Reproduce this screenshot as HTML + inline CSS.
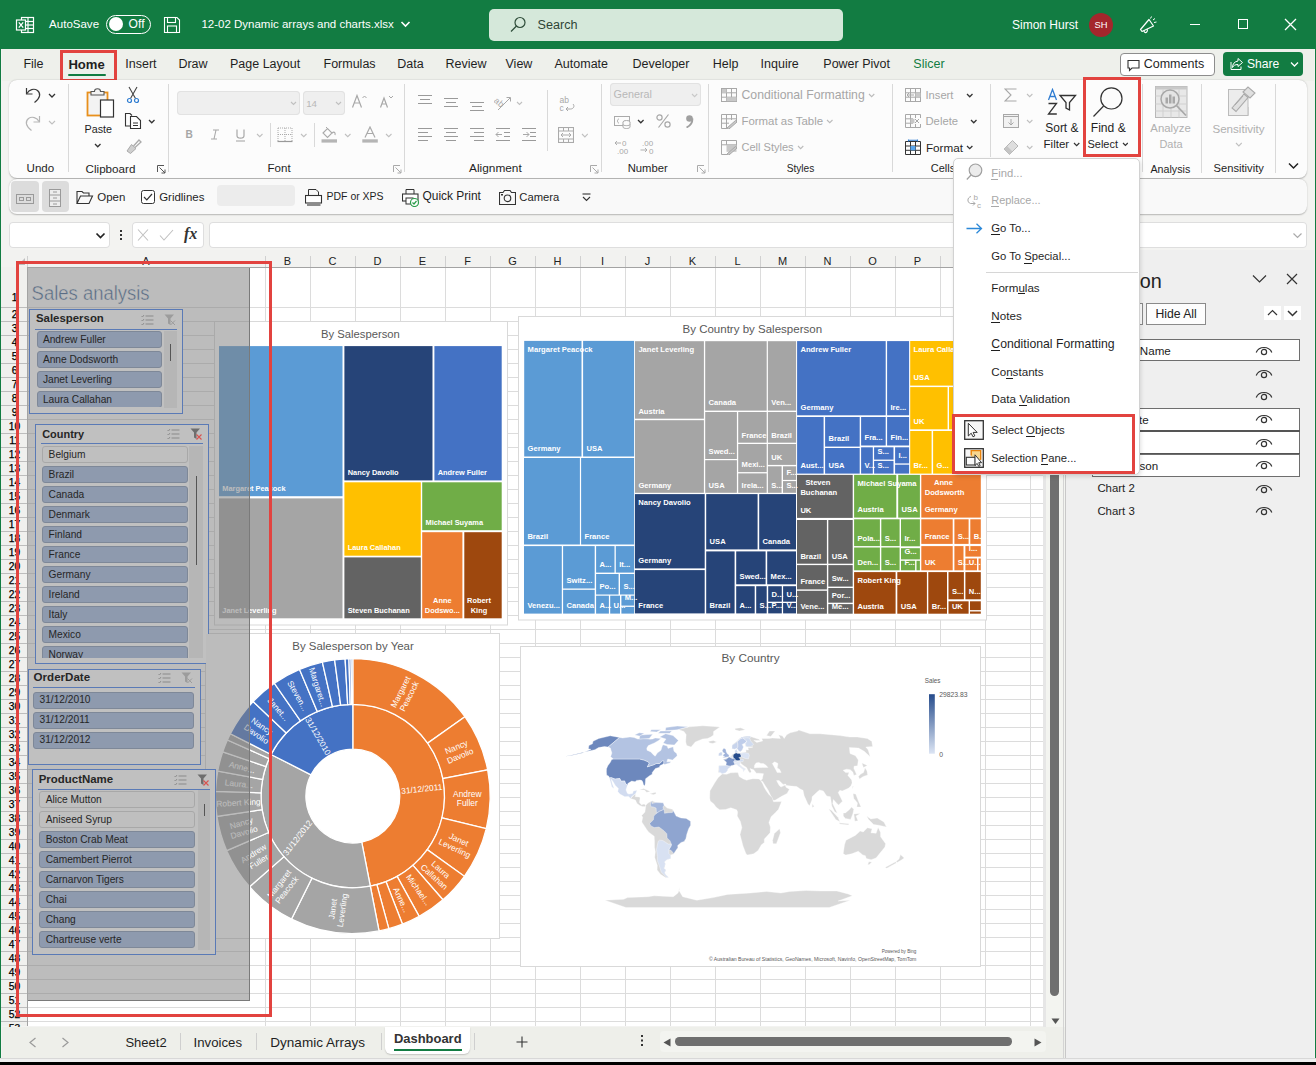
<!DOCTYPE html>
<html><head><meta charset="utf-8">
<style>
html,body{margin:0;padding:0}
body{width:1316px;height:1065px;position:relative;overflow:hidden;background:#f3f3f1;font-family:"Liberation Sans",sans-serif;color:#1f1f1f}
.t{position:absolute;white-space:nowrap;line-height:1}
.vs{position:absolute;top:88px;width:1px;height:84px;background:#d9d9d9}
.gl{position:absolute;top:162px;font-size:12.5px;text-align:center;line-height:1;color:#222}
.dl{position:absolute;top:164px;width:10px;height:10px}
.ch{position:absolute;top:256px;height:11px;font-size:11px;line-height:11px;text-align:center;color:#222}
.rh{position:absolute;left:1px;width:27px;height:13px;font-size:10.3px;line-height:13px;text-align:center;color:#000;-webkit-text-stroke:0.25px #000}
.si{position:absolute;height:17px;box-sizing:border-box;border:1px solid #7e8898;border-radius:3px;background:#8e9aae;font-size:11.5px;line-height:15px;padding-left:7px;color:#222;white-space:nowrap;overflow:hidden}
.su{background:#bfbfbf;border-color:#a8a8a8}
.sh{position:absolute;font-size:12px;font-weight:bold;color:#2a2a2a;line-height:1}
.sb{position:absolute;border:1px solid #5b7bb8;box-sizing:border-box;background:#c0c0c0}
.mi{position:absolute;left:991px;font-size:12.5px;line-height:1;white-space:nowrap;color:#1f1f1f}
.pr{position:absolute;font-size:12.5px;line-height:1;color:#1f1f1f;white-space:nowrap}
</style></head><body>
<div style="position:absolute;left:0;top:0;width:1316px;height:49px;background:#127c42"></div>
<div style="position:absolute;left:0;top:0;width:1.3px;height:1060px;background:#127c42"></div>
<div style="position:absolute;left:1314.7px;top:0;width:1.3px;height:1060px;background:#127c42"></div>
<svg style="position:absolute;left:15px;top:15px" width="20" height="20" viewBox="0 0 20 20">
 <rect x="6.5" y="2.5" width="12" height="15" fill="none" stroke="#fff" stroke-width="1.2"/>
 <line x1="10" y1="6.5" x2="18.5" y2="6.5" stroke="#fff" stroke-width="1.2"/>
 <line x1="10" y1="10" x2="18.5" y2="10" stroke="#fff" stroke-width="1.2"/>
 <line x1="10" y1="13.5" x2="18.5" y2="13.5" stroke="#fff" stroke-width="1.2"/>
 <line x1="13" y1="2.5" x2="13" y2="17.5" stroke="#fff" stroke-width="1.2"/>
 <rect x="1.5" y="5" width="9" height="10" fill="#127c42" stroke="#fff" stroke-width="1.2"/>
 <path d="M3.8 7.3 L8.2 12.7 M8.2 7.3 L3.8 12.7" stroke="#fff" stroke-width="1.3"/>
</svg>
<div class="t" style="left:49.10px;top:18.74px;font-size:11.53px;color:#ffffff">AutoSave</div>
<div style="position:absolute;left:106px;top:14.5px;width:45px;height:19.5px;border:1.2px solid #fff;border-radius:10px;box-sizing:border-box"></div>
<div style="position:absolute;left:108.5px;top:17px;width:14.4px;height:14.4px;border-radius:50%;background:#fff"></div>
<div class="t" style="left:128.60px;top:18.24px;font-size:12.12px;color:#ffffff">Off</div>
<svg style="position:absolute;left:163px;top:16px" width="18" height="18" viewBox="0 0 18 18">
 <path d="M1.5 1.5 H14 L16.5 4 V16.5 H1.5 Z" fill="none" stroke="#fff" stroke-width="1.1"/>
 <rect x="4.5" y="1.5" width="8" height="5" fill="none" stroke="#fff" stroke-width="1.1"/>
 <rect x="4.5" y="10" width="9" height="6.5" fill="none" stroke="#fff" stroke-width="1.1"/>
</svg>
<div class="t" style="left:201.40px;top:19.25px;font-size:11.51px;color:#ffffff">12-02 Dynamic arrays and charts.xlsx</div>
<svg style="position:absolute;left:400px;top:20px" width="11" height="9"><path d="M1.5 2 L5.5 6 L9.5 2" fill="none" stroke="#fff" stroke-width="1.6"/></svg>
<div style="position:absolute;left:489px;top:9px;width:354px;height:32px;background:#d5e8da;border-radius:5px"></div>
<svg style="position:absolute;left:508px;top:15px" width="20" height="20" viewBox="0 0 20 20"><circle cx="12" cy="7.5" r="5" fill="none" stroke="#2f4d3a" stroke-width="1.2"/><line x1="8.5" y1="11" x2="3" y2="16.5" stroke="#2f4d3a" stroke-width="1.3"/></svg>
<div class="t" style="left:537.50px;top:18.82px;font-size:12.62px;color:#2f4536">Search</div>
<div class="t" style="left:1012.00px;top:18.84px;font-size:12.00px;color:#ffffff">Simon Hurst</div>
<div style="position:absolute;left:1089px;top:13px;width:24px;height:24px;border-radius:50%;background:#a4262c"></div>
<div class="t" style="left:1094.50px;top:21.08px;font-size:9.35px;color:#ffffff">SH</div>
<svg style="position:absolute;left:1138px;top:15px" width="20" height="20" viewBox="0 0 20 20"><path d="M2.5 14.5 L11 4.5 L15.5 11 L4 16.5 Z" fill="none" stroke="#fff" stroke-width="1.2" stroke-linejoin="round"/><path d="M6 15.5 C6 18.5 9.5 18.5 9.5 14.3" fill="none" stroke="#fff" stroke-width="1.1"/><path d="M12.5 3.5 L13.5 1.5 M15 5 L17 3.5 M16 7.5 L18.5 7" stroke="#fff" stroke-width="1"/></svg>
<div style="position:absolute;left:1189.8px;top:24.2px;width:10px;height:1.1px;background:#fff"></div>
<div style="position:absolute;left:1238px;top:19px;width:10px;height:10px;border:1.2px solid #fff;box-sizing:border-box"></div>
<svg style="position:absolute;left:1284px;top:18px" width="13" height="13"><path d="M1 1 L12 12 M12 1 L1 12" stroke="#fff" stroke-width="1.3"/></svg>
<div style="position:absolute;left:2px;top:49px;width:1312px;height:32px;background:#eef0eb"></div>
<div class="t" style="left:23.40px;top:58.12px;font-size:12.50px">File</div>
<div class="t" style="left:125.30px;top:58.12px;font-size:12.50px">Insert</div>
<div class="t" style="left:178.40px;top:58.12px;font-size:12.50px">Draw</div>
<div class="t" style="left:230.00px;top:58.12px;font-size:12.50px">Page Layout</div>
<div class="t" style="left:323.50px;top:58.12px;font-size:12.50px">Formulas</div>
<div class="t" style="left:397.20px;top:58.12px;font-size:12.50px">Data</div>
<div class="t" style="left:445.50px;top:58.12px;font-size:12.50px">Review</div>
<div class="t" style="left:505.50px;top:58.12px;font-size:12.50px">View</div>
<div class="t" style="left:554.50px;top:58.12px;font-size:12.50px">Automate</div>
<div class="t" style="left:632.50px;top:58.12px;font-size:12.50px">Developer</div>
<div class="t" style="left:712.70px;top:58.12px;font-size:12.50px">Help</div>
<div class="t" style="left:760.60px;top:58.12px;font-size:12.50px">Inquire</div>
<div class="t" style="left:823.30px;top:58.12px;font-size:12.50px">Power Pivot</div>
<div class="t" style="left:68.40px;top:57.62px;font-size:13.09px;font-weight:bold">Home</div>
<div class="t" style="left:913.30px;top:58.12px;font-size:12.50px;color:#127c42">Slicer</div>
<div style="position:absolute;left:68px;top:74px;width:38px;height:2.3px;background:#127c42;border-radius:1px"></div>
<div style="position:absolute;left:1119.5px;top:52.5px;width:95px;height:23.5px;border:1px solid #8d8d8d;border-radius:4px;background:#fff;box-sizing:border-box"></div>
<svg style="position:absolute;left:1127px;top:59px" width="13" height="13" viewBox="0 0 13 13"><path d="M1 1.5 H12 V9 H5 L2.5 11.5 V9 H1 Z" fill="none" stroke="#333" stroke-width="1.1"/></svg>
<div class="t" style="left:1143.70px;top:58.09px;font-size:12.53px">Comments</div>
<div style="position:absolute;left:1223px;top:52px;width:80px;height:24px;background:#127c42;border-radius:4px"></div>
<svg style="position:absolute;left:1230px;top:57px" width="14" height="14" viewBox="0 0 14 14"><path d="M8 1.5 L12.5 5.5 L8 9.5 V7.5 C5 7.5 3.5 8.5 2.5 10.5 C2.5 7 4.5 4.5 8 4 Z" fill="none" stroke="#fff" stroke-width="1"/><path d="M1 5 V12.5 H11 V9.5" fill="none" stroke="#fff" stroke-width="1"/></svg>
<div class="t" style="left:1247.00px;top:58.43px;font-size:12.13px;color:#ffffff">Share</div>
<svg style="position:absolute;left:1290px;top:61px" width="9" height="7"><path d="M1 1.5 L4.5 5 L8 1.5" fill="none" stroke="#fff" stroke-width="1.3"/></svg>
<div style="position:absolute;left:60px;top:50px;width:57px;height:32px;border:3px solid #e2433f;box-sizing:border-box"></div><div style="position:absolute;left:9px;top:80px;width:1298px;height:98px;background:#fcfcfc;border-radius:8px;box-shadow:0 0.5px 1.5px rgba(0,0,0,0.28)"></div>
<div style="position:absolute;left:68.1px;top:84px;width:1px;height:88.4px;background:#d9d9d9"></div>
<div style="position:absolute;left:168.0px;top:84px;width:1px;height:88.4px;background:#d9d9d9"></div>
<div style="position:absolute;left:404.0px;top:84px;width:1px;height:88.4px;background:#d9d9d9"></div>
<div style="position:absolute;left:600.7px;top:84px;width:1px;height:88.4px;background:#d9d9d9"></div>
<div style="position:absolute;left:708.1px;top:84px;width:1px;height:88.4px;background:#d9d9d9"></div>
<div style="position:absolute;left:892.3px;top:84px;width:1px;height:88.4px;background:#d9d9d9"></div>
<div style="position:absolute;left:990.1px;top:84px;width:1px;height:73.0px;background:#d9d9d9"></div>
<div style="position:absolute;left:1142.0px;top:84px;width:1px;height:88.4px;background:#d9d9d9"></div>
<div style="position:absolute;left:1201.1px;top:84px;width:1px;height:88.8px;background:#d9d9d9"></div>
<div style="position:absolute;left:1275.0px;top:84px;width:1px;height:88.8px;background:#d9d9d9"></div>
<div class="t" style="left:26.60px;top:162.82px;font-size:11.55px;color:#1f1f1f">Undo</div>
<div class="t" style="left:85.60px;top:162.75px;font-size:11.64px;color:#1f1f1f">Clipboard</div>
<div class="t" style="left:267.50px;top:162.82px;font-size:11.55px;color:#1f1f1f">Font</div>
<div class="t" style="left:469.10px;top:162.58px;font-size:11.83px;color:#1f1f1f">Alignment</div>
<div class="t" style="left:627.70px;top:163.05px;font-size:11.28px;color:#1f1f1f">Number</div>
<div class="t" style="left:786.70px;top:164.00px;font-size:10.17px;color:#1f1f1f">Styles</div>
<div class="t" style="left:930.80px;top:163.28px;font-size:11.01px;color:#1f1f1f">Cells</div>
<div class="t" style="left:1150.50px;top:163.56px;font-size:10.68px;color:#1f1f1f">Analysis</div>
<div class="t" style="left:1213.60px;top:163.16px;font-size:11.16px;color:#1f1f1f">Sensitivity</div>
<svg style="position:absolute;left:157px;top:165px" width="9" height="9" viewBox="0 0 9 9"><path d="M0.5 7 V0.5 H7 M2.5 2.5 L8 8 M4.5 8 H8 V4.5" fill="none" stroke="#555" stroke-width="1"/></svg>
<svg style="position:absolute;left:393px;top:165px" width="9" height="9" viewBox="0 0 9 9"><path d="M0.5 7 V0.5 H7 M2.5 2.5 L8 8 M4.5 8 H8 V4.5" fill="none" stroke="#aaa" stroke-width="1"/></svg>
<svg style="position:absolute;left:590px;top:165px" width="9" height="9" viewBox="0 0 9 9"><path d="M0.5 7 V0.5 H7 M2.5 2.5 L8 8 M4.5 8 H8 V4.5" fill="none" stroke="#aaa" stroke-width="1"/></svg>
<svg style="position:absolute;left:697px;top:165px" width="9" height="9" viewBox="0 0 9 9"><path d="M0.5 7 V0.5 H7 M2.5 2.5 L8 8 M4.5 8 H8 V4.5" fill="none" stroke="#aaa" stroke-width="1"/></svg>
<svg style="position:absolute;left:24px;top:85px" width="18" height="46" viewBox="0 0 18 46">
 <path d="M2.5 3 V9 H8.5" fill="none" stroke="#3a3a3a" stroke-width="1.2"/>
 <path d="M3 8.5 C5 4.5 10 3 13.5 5.5 C17 8.5 16.5 13 10.5 17.5" fill="none" stroke="#3a3a3a" stroke-width="1.2"/>
 <path d="M15.5 31 V37 H9.5" fill="none" stroke="#b5b5b5" stroke-width="1.2"/>
 <path d="M15 36.5 C13 32.5 8 31 4.5 33.5 C1 36.5 1.5 41 7.5 45.5" fill="none" stroke="#b5b5b5" stroke-width="1.2"/>
</svg>
<svg style="position:absolute;left:47.5px;top:93.0px" width="8.0" height="5.5"><path d="M1 1 L4.00 4.00 L7.00 1" fill="none" stroke="#333" stroke-width="1.3"/></svg>
<svg style="position:absolute;left:47.5px;top:119.5px" width="8.0" height="5.5"><path d="M1 1 L4.00 4.00 L7.00 1" fill="none" stroke="#c0c0c0" stroke-width="1.1"/></svg>
<svg style="position:absolute;left:86px;top:87px" width="30" height="32" viewBox="0 0 30 32">
 <rect x="1.5" y="5.5" width="20" height="23" fill="#f3f3f3" stroke="#e8901c" stroke-width="1.8"/>
 <path d="M5 8 V4.5 H8.5 C8.5 0.8 14.5 0.8 14.5 4.5 H18 V8 Z" fill="#f3f3f3" stroke="#555" stroke-width="1.1"/>
 <rect x="14.5" y="13" width="13" height="17" fill="#fff" stroke="#333" stroke-width="1.2"/>
</svg>
<div class="t" style="left:84.60px;top:124.39px;font-size:10.76px">Paste</div>
<svg style="position:absolute;left:93.7px;top:143.4px" width="7.5" height="5.2"><path d="M1 1 L3.75 3.75 L6.50 1" fill="none" stroke="#333" stroke-width="1.3"/></svg>
<svg style="position:absolute;left:126px;top:86px" width="14" height="18" viewBox="0 0 14 18"><path d="M3 1 L9.5 12.5 M11 1 L4.5 12.5" stroke="#444" stroke-width="1.1"/><circle cx="3.5" cy="14.5" r="2" fill="none" stroke="#2e7cd1" stroke-width="1.2"/><circle cx="10.5" cy="14.5" r="2" fill="none" stroke="#2e7cd1" stroke-width="1.2"/></svg>
<svg style="position:absolute;left:124px;top:112px" width="18" height="18" viewBox="0 0 18 18"><path d="M6 14 H1.5 V1.5 H6 L8 3.5" fill="none" stroke="#333" stroke-width="1.1"/><path d="M6.5 4.5 H12.5 L16.5 8.5 V16.5 H6.5 Z" fill="#fff" stroke="#333" stroke-width="1.1"/><path d="M9 11 H14 M9 13.5 H14" stroke="#333" stroke-width="1"/></svg>
<svg style="position:absolute;left:147.8px;top:119.0px" width="7.5" height="5.2"><path d="M1 1 L3.75 3.75 L6.50 1" fill="none" stroke="#333" stroke-width="1.3"/></svg>
<svg style="position:absolute;left:125px;top:138px" width="17" height="17" viewBox="0 0 17 17"><path d="M8.5 8 L14 2 L16 4 L10 9.5" fill="none" stroke="#aaa" stroke-width="1.3"/><path d="M2 13 L6.5 6.5 L11 10.5 L5.5 15.5 Z" fill="#cfcfcf" stroke="#aaa" stroke-width="1"/></svg>
<div style="position:absolute;left:177.2px;top:91px;width:122.6px;height:23.7px;background:#efefef;border-radius:4px;box-shadow:inset 0 0 0 1px #e2e2e2"></div>
<svg style="position:absolute;left:289.8px;top:101.0px" width="7.0" height="5.0"><path d="M1 1 L3.50 3.50 L6.00 1" fill="none" stroke="#c0c0c0" stroke-width="1.1"/></svg>
<div style="position:absolute;left:302.5px;top:91px;width:42px;height:23.7px;background:#efefef;border-radius:4px;box-shadow:inset 0 0 0 1px #e2e2e2"></div>
<div class="t" style="left:306.20px;top:98.76px;font-size:9.73px;color:#b8b8b8">14</div>
<svg style="position:absolute;left:335.0px;top:101.0px" width="7.0" height="5.0"><path d="M1 1 L3.50 3.50 L6.00 1" fill="none" stroke="#c0c0c0" stroke-width="1.1"/></svg>
<svg style="position:absolute;left:351px;top:94px" width="45" height="15" viewBox="0 0 45 15"><path d="M1.5 13.5 L6 1.5 L10.5 13.5 M3.2 9 H8.8" fill="none" stroke="#a8a8a8" stroke-width="1.2"/><path d="M11.5 4 L13.5 2 L15.5 4" fill="none" stroke="#a8a8a8" stroke-width="1"/><path d="M29.5 13.5 L33 4 L36.5 13.5 M30.8 10 H35.2" fill="none" stroke="#a8a8a8" stroke-width="1.2"/><path d="M38 2 L40 4 L42 2" fill="none" stroke="#a8a8a8" stroke-width="1"/></svg>
<div class="t" style="left:185.40px;top:130.12px;font-size:10.14px;font-weight:bold;color:#a6a6a6">B</div>
<svg style="position:absolute;left:210px;top:129px" width="10" height="11" viewBox="0 0 10 11"><path d="M3 1 H9 M1 10 H7 M6 1 L4 10" fill="none" stroke="#a8a8a8" stroke-width="1.1"/></svg>
<svg style="position:absolute;left:235px;top:129px" width="11" height="13" viewBox="0 0 11 13"><path d="M2 0.5 V6.5 C2 10 9 10 9 6.5 V0.5" fill="none" stroke="#a8a8a8" stroke-width="1.2"/><path d="M1 12 H10" stroke="#a8a8a8" stroke-width="1.1"/></svg>
<svg style="position:absolute;left:255.5px;top:133.0px" width="7.5" height="5.2"><path d="M1 1 L3.75 3.75 L6.50 1" fill="none" stroke="#c0c0c0" stroke-width="1.1"/></svg>
<div style="position:absolute;left:270.1px;top:123px;width:1px;height:24px;background:#d9d9d9"></div>
<svg style="position:absolute;left:276.5px;top:126.5px" width="16" height="16" viewBox="0 0 16 16"><path d="M1 1 H15 V14 M1 1 V14 M8 1 V14 M1 7.5 H15" fill="none" stroke="#aaa" stroke-width="1" stroke-dasharray="1 1"/><path d="M0.5 14.5 H15.5" stroke="#999" stroke-width="1.2"/></svg>
<svg style="position:absolute;left:299.7px;top:133.0px" width="7.5" height="5.2"><path d="M1 1 L3.75 3.75 L6.50 1" fill="none" stroke="#c0c0c0" stroke-width="1.1"/></svg>
<div style="position:absolute;left:313.9px;top:123px;width:1px;height:24px;background:#d9d9d9"></div>
<svg style="position:absolute;left:321px;top:126px" width="17" height="17" viewBox="0 0 17 17"><path d="M2 7 L6.5 2.5 L11 7 L6.5 11.5 Z" fill="none" stroke="#aaa" stroke-width="1.1"/><path d="M5 1 L6.5 2.5" stroke="#aaa"/><path d="M11 7 C13.5 5 14.5 7 14 9" fill="none" stroke="#aaa" stroke-width="1.1"/><rect x="0.5" y="13.3" width="15.5" height="3.3" fill="#b5b5b5"/></svg>
<svg style="position:absolute;left:344.0px;top:133.0px" width="7.5" height="5.2"><path d="M1 1 L3.75 3.75 L6.50 1" fill="none" stroke="#c0c0c0" stroke-width="1.1"/></svg>
<svg style="position:absolute;left:362px;top:126px" width="17" height="17" viewBox="0 0 17 17"><path d="M3 11.5 L8 1 L13 11.5 M5 7.5 H11" fill="none" stroke="#aaa" stroke-width="1.2"/><rect x="0.3" y="13.3" width="15.5" height="3.3" fill="#b5b5b5"/></svg>
<svg style="position:absolute;left:385.0px;top:133.0px" width="7.5" height="5.2"><path d="M1 1 L3.75 3.75 L6.50 1" fill="none" stroke="#c0c0c0" stroke-width="1.1"/></svg>
<div style="position:absolute;left:417.9px;top:94.6px;width:14.0px;height:1.2px;background:#9a9a9a"></div><div style="position:absolute;left:419.9px;top:98.7px;width:10.0px;height:1.2px;background:#9a9a9a"></div><div style="position:absolute;left:417.9px;top:103.0px;width:14.0px;height:1.2px;background:#9a9a9a"></div>
<div style="position:absolute;left:444.0px;top:97.6px;width:14.0px;height:1.2px;background:#9a9a9a"></div><div style="position:absolute;left:446.0px;top:101.9px;width:10.0px;height:1.2px;background:#9a9a9a"></div><div style="position:absolute;left:444.0px;top:106.0px;width:14.0px;height:1.2px;background:#9a9a9a"></div>
<div style="position:absolute;left:470.0px;top:101.9px;width:14.0px;height:1.2px;background:#9a9a9a"></div><div style="position:absolute;left:472.0px;top:106.0px;width:10.0px;height:1.2px;background:#9a9a9a"></div><div style="position:absolute;left:470.0px;top:110.1px;width:14.0px;height:1.2px;background:#9a9a9a"></div>
<svg style="position:absolute;left:494px;top:95px" width="18" height="16" viewBox="0 0 18 16"><text x="1" y="10" font-size="9" fill="#a8a8a8" font-family="Liberation Sans" transform="rotate(40 5 6)">ab</text><path d="M4 15 L16 3 M12.5 2.5 H16.5 V6.5" fill="none" stroke="#a8a8a8" stroke-width="1"/></svg>
<svg style="position:absolute;left:516.2px;top:101.0px" width="7.0" height="5.0"><path d="M1 1 L3.50 3.50 L6.00 1" fill="none" stroke="#c0c0c0" stroke-width="1.1"/></svg>
<div style="position:absolute;left:417.9px;top:127.7px;width:14.0px;height:1.2px;background:#9a9a9a"></div><div style="position:absolute;left:417.9px;top:131.8px;width:10.0px;height:1.2px;background:#9a9a9a"></div><div style="position:absolute;left:417.9px;top:135.9px;width:14.0px;height:1.2px;background:#9a9a9a"></div><div style="position:absolute;left:417.9px;top:139.9px;width:10.0px;height:1.2px;background:#9a9a9a"></div>
<div style="position:absolute;left:444.0px;top:127.7px;width:14.0px;height:1.2px;background:#9a9a9a"></div><div style="position:absolute;left:446.0px;top:131.8px;width:10.0px;height:1.2px;background:#9a9a9a"></div><div style="position:absolute;left:444.0px;top:135.9px;width:14.0px;height:1.2px;background:#9a9a9a"></div><div style="position:absolute;left:446.0px;top:139.9px;width:10.0px;height:1.2px;background:#9a9a9a"></div>
<div style="position:absolute;left:470.0px;top:127.7px;width:14.0px;height:1.2px;background:#9a9a9a"></div><div style="position:absolute;left:474.0px;top:131.8px;width:10.0px;height:1.2px;background:#9a9a9a"></div><div style="position:absolute;left:470.0px;top:135.9px;width:14.0px;height:1.2px;background:#9a9a9a"></div><div style="position:absolute;left:474.0px;top:139.9px;width:10.0px;height:1.2px;background:#9a9a9a"></div>
<div style="position:absolute;left:495.9px;top:127.7px;width:14.0px;height:1.2px;background:#9a9a9a"></div><div style="position:absolute;left:503.9px;top:131.8px;width:6.0px;height:1.2px;background:#9a9a9a"></div><div style="position:absolute;left:503.9px;top:135.9px;width:6.0px;height:1.2px;background:#9a9a9a"></div><div style="position:absolute;left:495.9px;top:139.9px;width:14.0px;height:1.2px;background:#9a9a9a"></div>
<svg style="position:absolute;left:495px;top:131px" width="8" height="7"><path d="M7 3.5 H1 M3.5 1 L1 3.5 L3.5 6" fill="none" stroke="#a8a8a8" stroke-width="1"/></svg>
<div style="position:absolute;left:522.0px;top:127.7px;width:14.0px;height:1.2px;background:#9a9a9a"></div><div style="position:absolute;left:530.0px;top:131.8px;width:6.0px;height:1.2px;background:#9a9a9a"></div><div style="position:absolute;left:530.0px;top:135.9px;width:6.0px;height:1.2px;background:#9a9a9a"></div><div style="position:absolute;left:522.0px;top:139.9px;width:14.0px;height:1.2px;background:#9a9a9a"></div>
<svg style="position:absolute;left:522px;top:131px" width="8" height="7"><path d="M1 3.5 H7 M4.5 1 L7 3.5 L4.5 6" fill="none" stroke="#a8a8a8" stroke-width="1"/></svg>
<div style="position:absolute;left:547px;top:90px;width:1px;height:61px;background:#d9d9d9"></div>
<svg style="position:absolute;left:558px;top:95px" width="18" height="17" viewBox="0 0 18 17"><text x="1.5" y="8" font-size="8.5" fill="#a8a8a8" font-family="Liberation Sans">ab</text><text x="1.5" y="15.5" font-size="8.5" fill="#a8a8a8" font-family="Liberation Sans">c</text><path d="M15 9 C17 11 15.5 14 12.5 14 H8 M10 12 L8 14 L10 16" fill="none" stroke="#a8a8a8" stroke-width="1"/></svg>
<svg style="position:absolute;left:557.5px;top:126.5px" width="16" height="16" viewBox="0 0 16 16"><rect x="0.5" y="0.5" width="15" height="15" fill="none" stroke="#aaa" stroke-width="1.1"/><path d="M0.5 4 H15.5 M0.5 12 H15.5 M5.5 0.5 V4 M10.5 0.5 V4 M5.5 12 V15.5 M10.5 12 V15.5 M3 8 H13 M5 6 L3 8 L5 10 M11 6 L13 8 L11 10" fill="none" stroke="#aaa" stroke-width="1"/></svg>
<svg style="position:absolute;left:580.6px;top:133.0px" width="7.8" height="5.4"><path d="M1 1 L3.90 3.90 L6.80 1" fill="none" stroke="#c0c0c0" stroke-width="1.1"/></svg>
<div style="position:absolute;left:610.3px;top:83.3px;width:90.7px;height:23px;background:#efefef;border-radius:4px;box-shadow:inset 0 0 0 1px #e2e2e2"></div>
<div class="t" style="left:613.60px;top:89.35px;font-size:10.81px;color:#b8b8b8">General</div>
<svg style="position:absolute;left:691.0px;top:93.0px" width="7.2" height="5.1"><path d="M1 1 L3.60 3.60 L6.20 1" fill="none" stroke="#c8c8c8" stroke-width="1.1"/></svg>
<svg style="position:absolute;left:614px;top:116px" width="17" height="13" viewBox="0 0 17 13"><rect x="0.5" y="0.5" width="15" height="9" fill="none" stroke="#aaa" stroke-width="1"/><path d="M5 3 C3 3 3 7 5 7" fill="none" stroke="#aaa"/><ellipse cx="12.5" cy="6" rx="3.5" ry="1.5" fill="#fcfcfc" stroke="#aaa"/><path d="M9 6 V11 C9 13 16 13 16 11 V6" fill="#fcfcfc" stroke="#aaa"/><path d="M9 8.5 C9 10 16 10 16 8.5" fill="none" stroke="#aaa"/></svg>
<svg style="position:absolute;left:636.6px;top:119.0px" width="7.6" height="5.3"><path d="M1 1 L3.80 3.80 L6.60 1" fill="none" stroke="#333" stroke-width="1.3"/></svg>
<svg style="position:absolute;left:655.5px;top:114px" width="15" height="14" viewBox="0 0 15 14"><circle cx="3.5" cy="3.5" r="2.6" fill="none" stroke="#a8a8a8" stroke-width="1.2"/><circle cx="11.5" cy="10.5" r="2.6" fill="none" stroke="#a8a8a8" stroke-width="1.2"/><path d="M12.5 0.5 L2.5 13.5" stroke="#a8a8a8" stroke-width="1.2"/></svg>
<svg style="position:absolute;left:685px;top:115px" width="9" height="13" viewBox="0 0 9 13"><circle cx="4.5" cy="3.5" r="3.3" fill="#a0a0a0"/><path d="M7.5 3.5 C7.5 8 5 11 1.5 12.5" fill="none" stroke="#a0a0a0" stroke-width="1.8"/></svg>
<svg style="position:absolute;left:613.5px;top:139px" width="45" height="15" viewBox="0 0 45 15" font-family="Liberation Sans" font-size="8" fill="#a8a8a8"><text x="8" y="7">0</text><text x="3" y="14.5">.00</text><path d="M7 4 H1 M3 2 L1 4 L3 6" fill="none" stroke="#a8a8a8" stroke-width="0.9"/><text x="28" y="7">.00</text><text x="35" y="14.5">0</text><path d="M26.5 11 H33 M31 9 L33 11 L31 13" fill="none" stroke="#a8a8a8" stroke-width="0.9"/></svg>
<svg style="position:absolute;left:721px;top:88px" width="16" height="14" viewBox="0 0 16 14"><rect x="0.5" y="0.5" width="15" height="13" fill="none" stroke="#a8a8a8"/><path d="M0.5 4.8 H15.5 M0.5 9.2 H15.5 M5.5 0.5 V13.5 M10.5 0.5 V13.5" stroke="#a8a8a8"/><rect x="1" y="1" width="4.5" height="3.8" fill="#c8c8c8"/><rect x="5.5" y="9.2" width="10" height="4" fill="#c8c8c8"/></svg>
<div class="t" style="left:741.50px;top:89.13px;font-size:12.25px;color:#a6a6a6">Conditional Formatting</div>
<svg style="position:absolute;left:868.0px;top:93.0px" width="7.3" height="5.2"><path d="M1 1 L3.65 3.65 L6.30 1" fill="none" stroke="#bbb" stroke-width="1.1"/></svg>
<svg style="position:absolute;left:721px;top:114px" width="16" height="15" viewBox="0 0 16 15"><path d="M9 14.5 H0.5 V0.5 H15.5 V7" fill="none" stroke="#a8a8a8"/><path d="M0.5 4.8 H15.5 M0.5 9.2 H8 M5.5 0.5 V14.5 M10.5 0.5 V6" stroke="#a8a8a8"/><path d="M6 14 L14.5 6.5 L16 8 L8 15" fill="#c8c8c8" stroke="#a8a8a8" stroke-width="1"/></svg>
<div class="t" style="left:741.50px;top:115.84px;font-size:11.41px;color:#a6a6a6">Format as Table</div>
<svg style="position:absolute;left:826.1px;top:119.0px" width="7.5" height="5.2"><path d="M1 1 L3.75 3.75 L6.50 1" fill="none" stroke="#bbb" stroke-width="1.1"/></svg>
<svg style="position:absolute;left:721px;top:140px" width="16" height="15" viewBox="0 0 16 15"><path d="M9 14.5 H0.5 V0.5 H15.5 V7" fill="none" stroke="#a8a8a8"/><path d="M0.5 4.8 H15.5 M5.5 0.5 V4.8" stroke="#a8a8a8"/><rect x="5.5" y="4.8" width="10" height="7" fill="#c8c8c8"/><path d="M6 14 L14.5 6.5 L16 8 L8 15" fill="#c8c8c8" stroke="#a8a8a8" stroke-width="1"/></svg>
<div class="t" style="left:741.50px;top:142.17px;font-size:11.03px;color:#a6a6a6">Cell Styles</div>
<svg style="position:absolute;left:797.2px;top:145.0px" width="7.3" height="5.2"><path d="M1 1 L3.65 3.65 L6.30 1" fill="none" stroke="#bbb" stroke-width="1.1"/></svg>
<svg style="position:absolute;left:905px;top:88px" width="16" height="14" viewBox="0 0 16 14"><rect x="0.5" y="0.5" width="15" height="13" fill="none" stroke="#a8a8a8"/><path d="M0.5 4.8 H15.5 M0.5 9.2 H15.5 M5.5 0.5 V13.5 M10.5 0.5 V13.5" stroke="#a8a8a8"/><rect x="10.5" y="4.8" width="5" height="4.4" fill="#c8c8c8"/><path d="M9 7 H2 M4 5 L2 7 L4 9" fill="none" stroke="#a8a8a8"/></svg>
<div class="t" style="left:925.50px;top:90.05px;font-size:11.16px;color:#a6a6a6">Insert</div>
<svg style="position:absolute;left:965.9px;top:93.0px" width="7.5" height="5.2"><path d="M1 1 L3.75 3.75 L6.50 1" fill="none" stroke="#333" stroke-width="1.3"/></svg>
<svg style="position:absolute;left:905px;top:114px" width="16" height="14" viewBox="0 0 16 14"><path d="M0.5 0.5 H15.5 M0.5 13.5 H15.5 M0.5 4.8 H8 M0.5 9.2 H8 M0.5 0.5 V13.5 M5.5 0.5 V13.5 M10.5 0.5 V4 M10.5 10 V13.5 M15.5 0.5 V4 M15.5 10 V13.5" stroke="#a8a8a8" fill="none"/><rect x="5.5" y="4.8" width="4" height="4.4" fill="#c8c8c8"/><path d="M10 5 L14 9 M14 5 L10 9" stroke="#a8a8a8"/></svg>
<div class="t" style="left:925.50px;top:115.98px;font-size:11.25px;color:#a6a6a6">Delete</div>
<svg style="position:absolute;left:970.0px;top:119.0px" width="7.5" height="5.2"><path d="M1 1 L3.75 3.75 L6.50 1" fill="none" stroke="#333" stroke-width="1.3"/></svg>
<svg style="position:absolute;left:905px;top:139px" width="16" height="16" viewBox="0 0 16 16"><path d="M0.5 2.5 H15.5 V15.5 H0.5 Z M0.5 7 H15.5 M0.5 11.3 H15.5 M5.5 2.5 V15.5 M10.5 2.5 V15.5" fill="none" stroke="#333"/><rect x="5.5" y="7" width="5" height="4.3" fill="#58a6ef"/><path d="M3.5 0.5 V2.5 M12.5 0.5 V2.5 M3.5 1.2 H12.5" stroke="#2e7cd1" stroke-width="1.1"/></svg>
<div class="t" style="left:925.90px;top:141.58px;font-size:11.72px">Format</div>
<svg style="position:absolute;left:966.4px;top:145.0px" width="7.4" height="5.2"><path d="M1 1 L3.70 3.70 L6.40 1" fill="none" stroke="#333" stroke-width="1.3"/></svg>
<svg style="position:absolute;left:1004px;top:88px" width="13" height="14" viewBox="0 0 13 14"><path d="M12.5 1 H1 L7 7 L1 13 H12.5" fill="none" stroke="#a8a8a8" stroke-width="1.1"/></svg>
<svg style="position:absolute;left:1025.6px;top:93.0px" width="7.4" height="5.2"><path d="M1 1 L3.70 3.70 L6.40 1" fill="none" stroke="#c0c0c0" stroke-width="1.1"/></svg>
<svg style="position:absolute;left:1003px;top:114px" width="16" height="14" viewBox="0 0 16 14"><rect x="0.5" y="0.5" width="15" height="13" fill="#f2f2f2" stroke="#a8a8a8"/><path d="M0.5 2.5 H15.5" stroke="#a8a8a8"/><path d="M8 5 V11 M5.5 8.5 L8 11 L10.5 8.5" fill="none" stroke="#a8a8a8"/></svg>
<svg style="position:absolute;left:1026.0px;top:119.0px" width="7.4" height="5.2"><path d="M1 1 L3.70 3.70 L6.40 1" fill="none" stroke="#c0c0c0" stroke-width="1.1"/></svg>
<svg style="position:absolute;left:1003px;top:139px" width="16" height="16" viewBox="0 0 16 16"><path d="M1 10 L9.5 1.5 L15 7 L6.5 15.5 Z" fill="#dedede" stroke="#b5b5b5"/><path d="M1 10 L4 7 L9.5 12.5 L6.5 15.5 Z" fill="#c4c4c4"/></svg>
<svg style="position:absolute;left:1026.0px;top:145.0px" width="7.4" height="5.2"><path d="M1 1 L3.70 3.70 L6.40 1" fill="none" stroke="#c0c0c0" stroke-width="1.1"/></svg>
<svg style="position:absolute;left:1047px;top:88px" width="31" height="28" viewBox="0 0 31 28" font-family="Liberation Sans"><path d="M1.5 12 L5.5 1.5 L9.5 12 M2.8 8.5 H8.2" fill="none" stroke="#2e7cd1" stroke-width="1.3"/><path d="M1.5 15.5 H9.5 L1.5 26 H9.8" fill="none" stroke="#333" stroke-width="1.3"/><path d="M13 7.5 H28.5 L22.5 14.5 V22 L19 20 V14.5 Z" fill="none" stroke="#333" stroke-width="1.3"/></svg>
<div class="t" style="left:1045.30px;top:122.59px;font-size:11.94px">Sort &amp;</div>
<div class="t" style="left:1043.60px;top:138.88px;font-size:11.49px">Filter</div>
<svg style="position:absolute;left:1072.5px;top:142.0px" width="7.3" height="5.2"><path d="M1 1 L3.65 3.65 L6.30 1" fill="none" stroke="#333" stroke-width="1.2"/></svg>
<svg style="position:absolute;left:1092px;top:86px" width="32" height="32" viewBox="0 0 32 32"><circle cx="19.4" cy="12.4" r="10.6" fill="none" stroke="#333" stroke-width="1.2"/><path d="M11.6 20 L1.5 30.5" stroke="#333" stroke-width="1.2"/></svg>
<div class="t" style="left:1090.80px;top:122.28px;font-size:12.08px">Find &amp;</div>
<div class="t" style="left:1087.50px;top:139.31px;font-size:10.97px">Select</div>
<svg style="position:absolute;left:1121.5px;top:142.0px" width="6.8" height="4.9"><path d="M1 1 L3.40 3.40 L5.80 1" fill="none" stroke="#333" stroke-width="1.2"/></svg>
<div style="position:absolute;left:1083.2px;top:77px;width:57.8px;height:79.7px;border:3px solid #e2433f;box-sizing:border-box"></div>
<svg style="position:absolute;left:1155px;top:86px" width="33" height="32" viewBox="0 0 33 32">
<rect x="0.5" y="0.5" width="31.5" height="31" fill="#e8e8e8" stroke="#b8b8b8"/>
<rect x="0.5" y="0.5" width="31.5" height="3" fill="#c9c9c9"/>
<path d="M0.5 10 H32 M0.5 18 H32 M0.5 25 H32 M8 3.5 V31.5 M16 3.5 V31.5 M24 3.5 V31.5" stroke="#d0d0d0"/>
<circle cx="15" cy="13" r="9" fill="#e4e4e4" stroke="#a8a8a8" stroke-width="1.5"/>
<rect x="10.5" y="11.5" width="2.5" height="6" fill="#a8a8a8"/><rect x="14" y="8.5" width="2.5" height="9" fill="#a8a8a8"/><rect x="17.5" y="10.5" width="2.5" height="7" fill="#a8a8a8"/>
<path d="M21.5 19.5 L31 29.5" stroke="#a8a8a8" stroke-width="1.8"/></svg>
<div class="t" style="left:1150.30px;top:122.87px;font-size:11.38px;color:#b0b0b0">Analyze</div>
<div class="t" style="left:1159.40px;top:139.31px;font-size:10.97px;color:#b0b0b0">Data</div>
<svg style="position:absolute;left:1228px;top:86px" width="28" height="30" viewBox="0 0 28 30">
<path d="M0.5 3.5 H17 M0.5 3.5 V29.5 H20 V21" fill="#ececec" stroke="#bbb"/>
<rect x="0.5" y="3.5" width="19.5" height="26" fill="#ececec" stroke="#bbb"/>
<path d="M4 22 L16 8 L20 11.5 L8 25.5 Z" fill="#e0e0e0" stroke="#aaa" stroke-width="1.1"/>
<path d="M7 19 L15 10" stroke="#aaa" stroke-width="1"/>
<path d="M15 6 L20 1 L27 7 L22 12 Z" fill="#e0e0e0" stroke="#aaa" stroke-width="1.1"/>
</svg>
<div class="t" style="left:1212.40px;top:122.66px;font-size:11.62px;color:#b0b0b0">Sensitivity</div>
<svg style="position:absolute;left:1234.7px;top:142.0px" width="7.7" height="5.3"><path d="M1 1 L3.85 3.85 L6.70 1" fill="none" stroke="#c0c0c0" stroke-width="1.1"/></svg>
<svg style="position:absolute;left:1287.5px;top:162px" width="11" height="8"><path d="M1 1.5 L5.5 6 L10 1.5" fill="none" stroke="#222" stroke-width="1.5"/></svg>
<div style="position:absolute;left:9px;top:179px;width:1298px;height:35px;background:#f9f9f9;border-radius:8px;box-shadow:0 0.5px 1.5px rgba(0,0,0,0.25)"></div>
<div style="position:absolute;left:11px;top:181px;width:28px;height:31px;background:#dcdcdc;border-radius:4px"></div>
<svg style="position:absolute;left:16px;top:194px" width="18" height="10" viewBox="0 0 18 10"><rect x="0.5" y="0.5" width="17" height="9" fill="none" stroke="#9a9a9a"/><rect x="3.5" y="3.5" width="4" height="3" fill="none" stroke="#9a9a9a"/><rect x="10.5" y="3.5" width="4" height="3" fill="none" stroke="#9a9a9a"/></svg>
<div style="position:absolute;left:41.5px;top:181px;width:27.5px;height:31px;background:#dcdcdc;border-radius:4px"></div>
<svg style="position:absolute;left:49px;top:189px" width="12" height="18" viewBox="0 0 12 18"><rect x="0.5" y="0.5" width="11" height="17" fill="#ededed" stroke="#9a9a9a"/><path d="M0.5 6 H11.5 M0.5 12 H11.5 M4 3 H8 M4 9 H8 M4 15 H8" stroke="#9a9a9a"/></svg>
<svg style="position:absolute;left:76px;top:190px" width="18" height="15" viewBox="0 0 18 15"><path d="M1 13.5 V1.5 H6 L7.5 3 H13 V6 M1 13.5 H13 L16.5 6 H4.5 Z" fill="none" stroke="#333" stroke-width="1.1"/></svg>
<div class="t" style="left:97.30px;top:191.57px;font-size:11.49px">Open</div>
<svg style="position:absolute;left:140.5px;top:189.5px" width="14" height="14" viewBox="0 0 14 14"><rect x="0.5" y="0.5" width="13" height="13" rx="2" fill="#fff" stroke="#333"/><path d="M3 7 L5.8 9.8 L11 4" fill="none" stroke="#333" stroke-width="1.2"/></svg>
<div class="t" style="left:159.20px;top:191.60px;font-size:11.46px">Gridlines</div>
<div style="position:absolute;left:217px;top:185px;width:78px;height:21px;background:#ececec;border-radius:4px"></div>
<svg style="position:absolute;left:305px;top:189px" width="18" height="17" viewBox="0 0 18 17"><path d="M3.5 7 V0.5 H11 L13.5 3 V7" fill="none" stroke="#333"/><rect x="0.5" y="6.5" width="16" height="7.5" fill="#fff" stroke="#333" stroke-width="1.1"/><path d="M2 16 H15.5" stroke="#333" stroke-width="1.1"/></svg>
<div class="t" style="left:326.50px;top:192.22px;font-size:10.49px">PDF or XPS</div>
<svg style="position:absolute;left:401.5px;top:189px" width="18" height="18" viewBox="0 0 18 18"><path d="M4 5 V0.5 H12 V5" fill="none" stroke="#333"/><rect x="0.5" y="5" width="15.5" height="7" fill="#fff" stroke="#333" stroke-width="1.1"/><rect x="4" y="9" width="7" height="6" fill="#fff" stroke="#333"/><circle cx="12.5" cy="13.5" r="4" fill="#fff" stroke="#2a9d4a" stroke-width="1.2"/><path d="M10.5 13.5 L12 15 L14.5 12" fill="none" stroke="#2a9d4a" stroke-width="1.2"/></svg>
<div class="t" style="left:422.50px;top:190.99px;font-size:11.94px">Quick Print</div>
<svg style="position:absolute;left:499px;top:190px" width="17" height="15" viewBox="0 0 17 15"><path d="M0.5 2.5 H4 L5.5 0.5 H11 L12.5 2.5 H16.5 V14.5 H0.5 Z" fill="none" stroke="#333" stroke-width="1.1"/><circle cx="8.5" cy="8.3" r="3.3" fill="none" stroke="#333" stroke-width="1.1"/><rect x="2" y="4" width="2" height="1.5" fill="#333"/></svg>
<div class="t" style="left:519.30px;top:191.56px;font-size:11.26px">Camera</div>
<svg style="position:absolute;left:581.5px;top:193px" width="9" height="9" viewBox="0 0 9 9"><path d="M0.5 1 H8.5" stroke="#333" stroke-width="1.1"/><path d="M1 4 L4.5 7.5 L8 4" fill="none" stroke="#333" stroke-width="1.1"/></svg>
<div style="position:absolute;left:9px;top:222px;width:101px;height:26px;background:#fff;border-radius:4px;box-shadow:inset 0 0 0 1px #dedede"></div>
<svg style="position:absolute;left:95px;top:232px" width="11" height="8"><path d="M1.5 1.5 L5.5 5.5 L9.5 1.5" fill="none" stroke="#222" stroke-width="1.7"/></svg>
<div style="position:absolute;left:120px;top:230px;width:2px;height:2px;background:#333;box-shadow:0 4px 0 #333,0 8px 0 #333"></div>
<div style="position:absolute;left:131.5px;top:222px;width:72.5px;height:26px;background:#fff;border-radius:4px;box-shadow:inset 0 0 0 1px #dedede"></div>
<svg style="position:absolute;left:137px;top:228px" width="40" height="15" viewBox="0 0 40 15"><path d="M1 1.5 L11 12.5 M11 1.5 L1 12.5" stroke="#c0c0c0" stroke-width="1.1"/><path d="M23 7.5 L27 12 L36 2" fill="none" stroke="#c0c0c0" stroke-width="1.1"/></svg>
<div class="t" style="left:184px;top:226px;font-size:16px;font-family:'Liberation Serif',serif;font-style:italic;font-weight:bold;color:#333">fx</div>
<div style="position:absolute;left:209px;top:222px;width:1098px;height:26px;background:#fff;border-radius:4px;box-shadow:inset 0 0 0 1px #dedede"></div>
<svg style="position:absolute;left:1292px;top:232px" width="11" height="8"><path d="M1.5 1.5 L5.5 5.5 L9.5 1.5" fill="none" stroke="#aaa" stroke-width="1.2"/></svg><div style="position:absolute;left:2px;top:250px;width:1063px;height:776px;background:#fff"></div>
<div style="position:absolute;left:265px;top:267px;width:778px;height:759px;background-image:repeating-linear-gradient(to right, #dcdcdc 0, #dcdcdc 1px, transparent 1px, transparent 45px)"></div>
<div style="position:absolute;left:27px;top:307px;width:1016px;height:719px;background-image:repeating-linear-gradient(to bottom, #dcdcdc 0, #dcdcdc 1px, transparent 1px, transparent 14px)"></div>
<div style="position:absolute;left:1px;top:250px;width:1042px;height:18px;background:#f2f2f0;border-bottom:1px solid #a3a3a3;box-sizing:border-box"></div>
<div class="ch" style="left:27px;width:238px">A</div>
<div class="ch" style="left:265px;width:45px">B</div>
<div class="ch" style="left:310px;width:45px">C</div>
<div class="ch" style="left:355px;width:45px">D</div>
<div class="ch" style="left:400px;width:45px">E</div>
<div class="ch" style="left:445px;width:45px">F</div>
<div class="ch" style="left:490px;width:45px">G</div>
<div class="ch" style="left:535px;width:45px">H</div>
<div class="ch" style="left:580px;width:45px">I</div>
<div class="ch" style="left:625px;width:45px">J</div>
<div class="ch" style="left:670px;width:45px">K</div>
<div class="ch" style="left:715px;width:45px">L</div>
<div class="ch" style="left:760px;width:45px">M</div>
<div class="ch" style="left:805px;width:45px">N</div>
<div class="ch" style="left:850px;width:45px">O</div>
<div class="ch" style="left:895px;width:45px">P</div>
<div class="ch" style="left:940px;width:45px">Q</div>
<div style="position:absolute;left:265px;top:256px;width:1px;height:11px;background:#d0d0d0"></div>
<div style="position:absolute;left:310px;top:256px;width:1px;height:11px;background:#d0d0d0"></div>
<div style="position:absolute;left:355px;top:256px;width:1px;height:11px;background:#d0d0d0"></div>
<div style="position:absolute;left:400px;top:256px;width:1px;height:11px;background:#d0d0d0"></div>
<div style="position:absolute;left:445px;top:256px;width:1px;height:11px;background:#d0d0d0"></div>
<div style="position:absolute;left:490px;top:256px;width:1px;height:11px;background:#d0d0d0"></div>
<div style="position:absolute;left:535px;top:256px;width:1px;height:11px;background:#d0d0d0"></div>
<div style="position:absolute;left:580px;top:256px;width:1px;height:11px;background:#d0d0d0"></div>
<div style="position:absolute;left:625px;top:256px;width:1px;height:11px;background:#d0d0d0"></div>
<div style="position:absolute;left:670px;top:256px;width:1px;height:11px;background:#d0d0d0"></div>
<div style="position:absolute;left:715px;top:256px;width:1px;height:11px;background:#d0d0d0"></div>
<div style="position:absolute;left:760px;top:256px;width:1px;height:11px;background:#d0d0d0"></div>
<div style="position:absolute;left:805px;top:256px;width:1px;height:11px;background:#d0d0d0"></div>
<div style="position:absolute;left:850px;top:256px;width:1px;height:11px;background:#d0d0d0"></div>
<div style="position:absolute;left:895px;top:256px;width:1px;height:11px;background:#d0d0d0"></div>
<div style="position:absolute;left:940px;top:256px;width:1px;height:11px;background:#d0d0d0"></div>
<div style="position:absolute;left:985px;top:256px;width:1px;height:11px;background:#d0d0d0"></div>
<div style="position:absolute;left:27px;top:256px;width:1px;height:11px;background:#d0d0d0"></div>
<div style="position:absolute;left:1px;top:267px;width:27px;height:759px;background:#f0f0ee;border-right:1px solid #a3a3a3;box-sizing:border-box"></div>
<div style="position:absolute;left:1px;top:307px;width:26px;height:719px;background-image:repeating-linear-gradient(to bottom, #bdbdbd 0, #bdbdbd 1px, transparent 1px, transparent 14px)"></div>
<div class="rh" style="top:291.3px">1</div>
<div class="rh" style="top:308px">2</div>
<div class="rh" style="top:322px">3</div>
<div class="rh" style="top:336px">4</div>
<div class="rh" style="top:350px">5</div>
<div class="rh" style="top:364px">6</div>
<div class="rh" style="top:378px">7</div>
<div class="rh" style="top:392px">8</div>
<div class="rh" style="top:406px">9</div>
<div class="rh" style="top:420px">10</div>
<div class="rh" style="top:434px">11</div>
<div class="rh" style="top:448px">12</div>
<div class="rh" style="top:462px">13</div>
<div class="rh" style="top:476px">14</div>
<div class="rh" style="top:490px">15</div>
<div class="rh" style="top:504px">16</div>
<div class="rh" style="top:518px">17</div>
<div class="rh" style="top:532px">18</div>
<div class="rh" style="top:546px">19</div>
<div class="rh" style="top:560px">20</div>
<div class="rh" style="top:574px">21</div>
<div class="rh" style="top:588px">22</div>
<div class="rh" style="top:602px">23</div>
<div class="rh" style="top:616px">24</div>
<div class="rh" style="top:630px">25</div>
<div class="rh" style="top:644px">26</div>
<div class="rh" style="top:658px">27</div>
<div class="rh" style="top:672px">28</div>
<div class="rh" style="top:686px">29</div>
<div class="rh" style="top:700px">30</div>
<div class="rh" style="top:714px">31</div>
<div class="rh" style="top:728px">32</div>
<div class="rh" style="top:742px">33</div>
<div class="rh" style="top:756px">34</div>
<div class="rh" style="top:770px">35</div>
<div class="rh" style="top:784px">36</div>
<div class="rh" style="top:798px">37</div>
<div class="rh" style="top:812px">38</div>
<div class="rh" style="top:826px">39</div>
<div class="rh" style="top:840px">40</div>
<div class="rh" style="top:854px">41</div>
<div class="rh" style="top:868px">42</div>
<div class="rh" style="top:882px">43</div>
<div class="rh" style="top:896px">44</div>
<div class="rh" style="top:910px">45</div>
<div class="rh" style="top:924px">46</div>
<div class="rh" style="top:938px">47</div>
<div class="rh" style="top:952px">48</div>
<div class="rh" style="top:966px">49</div>
<div class="rh" style="top:980px">50</div>
<div class="rh" style="top:994px">51</div>
<div class="rh" style="top:1008px">52</div>
<div class="rh" style="top:1022px">53</div>
<svg style="position:absolute;left:17px;top:257px" width="9" height="9"><path d="M8 1 V8 H1 Z" fill="#bdbdbd"/></svg><svg style="position:absolute;left:0;top:0" width="1316" height="1065" viewBox="0 0 1316 1065" font-family="Liberation Sans">
<rect x="214.50" y="321.50" width="293.00" height="303.50" fill="#fff" stroke="#d9d9d9" stroke-width="1"/>
<rect x="518.50" y="316.50" width="468.00" height="303.50" fill="#fff" stroke="#d9d9d9" stroke-width="1"/>
<rect x="205.50" y="633.50" width="294.00" height="305.00" fill="#fff" stroke="#d9d9d9" stroke-width="1"/>
<rect x="520.50" y="646.50" width="460.00" height="320.00" fill="#fff" stroke="#d9d9d9" stroke-width="1"/>
<text x="321.00" y="337.9" font-size="11.25" fill="#595959">By Salesperson</text>
<text x="682.50" y="332.7" font-size="11.53" fill="#595959">By Country by Salesperson</text>
<text x="292.30" y="649.7" font-size="11.45" fill="#595959">By Salesperson by Year</text>
<text x="721.50" y="662.4" font-size="11.75" fill="#595959">By Country</text>
<rect x="219.00" y="346.10" width="123.50" height="150.10" fill="#5b9bd5"/>
<text x="222.30" y="490.70" font-size="7.4" font-weight="bold" fill="#fff" text-anchor="start">Margaret Peacock</text>
<rect x="219.00" y="498.40" width="123.50" height="119.90" fill="#a5a5a5"/>
<text x="222.30" y="612.80" font-size="7.4" font-weight="bold" fill="#fff" text-anchor="start">Janet Leverling</text>
<rect x="344.40" y="346.10" width="88.10" height="134.30" fill="#264478"/>
<text x="347.70" y="474.90" font-size="7.4" font-weight="bold" fill="#fff" text-anchor="start">Nancy Davolio</text>
<rect x="434.40" y="346.10" width="67.30" height="134.30" fill="#4472c4"/>
<text x="437.70" y="474.90" font-size="7.4" font-weight="bold" fill="#fff" text-anchor="start">Andrew Fuller</text>
<rect x="344.40" y="482.30" width="76.40" height="73.40" fill="#ffc000"/>
<text x="347.70" y="550.20" font-size="7.4" font-weight="bold" fill="#fff" text-anchor="start">Laura Callahan</text>
<rect x="344.40" y="557.40" width="76.40" height="60.90" fill="#636363"/>
<text x="347.70" y="612.80" font-size="7.4" font-weight="bold" fill="#fff" text-anchor="start">Steven Buchanan</text>
<rect x="422.20" y="482.30" width="79.50" height="47.90" fill="#70ad47"/>
<text x="425.50" y="524.70" font-size="7.4" font-weight="bold" fill="#fff" text-anchor="start">Michael Suyama</text>
<rect x="422.20" y="532.20" width="40.20" height="86.10" fill="#ed7d31"/>
<text x="442.30" y="603.00" font-size="7.4" font-weight="bold" fill="#fff" text-anchor="middle">Anne</text>
<text x="442.30" y="613.30" font-size="7.4" font-weight="bold" fill="#fff" text-anchor="middle">Dodswo...</text>
<rect x="464.30" y="532.20" width="37.40" height="86.10" fill="#9e480e"/>
<text x="479.00" y="603.00" font-size="7.4" font-weight="bold" fill="#fff" text-anchor="middle">Robert</text>
<text x="479.00" y="613.30" font-size="7.4" font-weight="bold" fill="#fff" text-anchor="middle">King</text>
<rect x="524.20" y="340.90" width="57.30" height="115.60" fill="#5b9bd5"/>
<rect x="583.10" y="340.90" width="51.00" height="115.60" fill="#5b9bd5"/>
<rect x="524.00" y="458.00" width="55.90" height="86.50" fill="#5b9bd5"/>
<rect x="581.10" y="458.00" width="53.00" height="86.50" fill="#5b9bd5"/>
<rect x="524.00" y="546.10" width="37.80" height="67.50" fill="#5b9bd5"/>
<rect x="563.10" y="546.10" width="31.60" height="42.40" fill="#5b9bd5"/>
<rect x="563.10" y="589.80" width="31.60" height="23.80" fill="#5b9bd5"/>
<rect x="596.10" y="546.10" width="18.40" height="26.50" fill="#5b9bd5"/>
<rect x="615.80" y="546.10" width="18.30" height="26.50" fill="#5b9bd5"/>
<rect x="596.10" y="574.00" width="22.50" height="20.50" fill="#5b9bd5"/>
<rect x="620.00" y="574.00" width="14.10" height="20.50" fill="#5b9bd5"/>
<rect x="596.10" y="595.70" width="12.80" height="17.90" fill="#5b9bd5"/>
<rect x="610.20" y="595.70" width="9.80" height="17.90" fill="#5b9bd5"/>
<rect x="621.40" y="595.70" width="12.70" height="9.90" fill="#5b9bd5"/>
<rect x="621.40" y="606.90" width="12.70" height="6.70" fill="#5b9bd5"/>
<rect x="635.00" y="341.20" width="68.90" height="77.50" fill="#a5a5a5"/>
<rect x="635.00" y="420.20" width="68.90" height="72.60" fill="#a5a5a5"/>
<rect x="705.20" y="341.20" width="61.50" height="69.40" fill="#a5a5a5"/>
<rect x="767.90" y="341.20" width="28.20" height="69.40" fill="#a5a5a5"/>
<rect x="705.20" y="412.00" width="31.70" height="47.00" fill="#a5a5a5"/>
<rect x="705.20" y="460.20" width="31.70" height="32.60" fill="#a5a5a5"/>
<rect x="738.20" y="412.00" width="28.50" height="30.70" fill="#a5a5a5"/>
<rect x="767.90" y="412.00" width="28.20" height="30.70" fill="#a5a5a5"/>
<rect x="738.20" y="444.00" width="28.50" height="28.10" fill="#a5a5a5"/>
<rect x="738.20" y="473.40" width="28.50" height="19.40" fill="#a5a5a5"/>
<rect x="767.90" y="444.00" width="28.20" height="20.90" fill="#a5a5a5"/>
<rect x="767.90" y="466.30" width="13.70" height="26.50" fill="#a5a5a5"/>
<rect x="783.00" y="466.30" width="13.10" height="13.60" fill="#a5a5a5"/>
<rect x="783.00" y="481.10" width="13.10" height="11.70" fill="#a5a5a5"/>
<rect x="634.90" y="494.10" width="69.80" height="74.30" fill="#264478"/>
<rect x="634.90" y="570.10" width="69.80" height="43.30" fill="#264478"/>
<rect x="706.20" y="494.10" width="51.40" height="55.30" fill="#264478"/>
<rect x="759.20" y="494.10" width="36.80" height="55.30" fill="#264478"/>
<rect x="706.20" y="551.40" width="28.40" height="62.00" fill="#264478"/>
<rect x="736.20" y="551.40" width="29.40" height="32.90" fill="#264478"/>
<rect x="767.20" y="551.40" width="28.80" height="32.90" fill="#264478"/>
<rect x="736.20" y="586.20" width="18.50" height="27.20" fill="#264478"/>
<rect x="756.20" y="586.20" width="10.50" height="27.20" fill="#264478"/>
<rect x="768.20" y="586.20" width="13.60" height="15.50" fill="#264478"/>
<rect x="783.10" y="586.20" width="12.90" height="15.50" fill="#264478"/>
<rect x="768.20" y="603.00" width="13.60" height="10.40" fill="#264478"/>
<rect x="783.10" y="603.00" width="12.90" height="10.40" fill="#264478"/>
<rect x="797.10" y="341.10" width="88.60" height="74.20" fill="#4472c4"/>
<rect x="887.10" y="341.10" width="22.00" height="74.20" fill="#4472c4"/>
<rect x="797.10" y="417.00" width="26.50" height="56.60" fill="#4472c4"/>
<rect x="825.10" y="417.00" width="34.60" height="29.60" fill="#4472c4"/>
<rect x="825.10" y="448.00" width="34.60" height="25.60" fill="#4472c4"/>
<rect x="861.10" y="417.00" width="24.60" height="28.50" fill="#4472c4"/>
<rect x="887.10" y="417.00" width="22.00" height="28.50" fill="#4472c4"/>
<rect x="861.10" y="447.30" width="11.70" height="26.30" fill="#4472c4"/>
<rect x="874.10" y="447.30" width="19.40" height="12.30" fill="#4472c4"/>
<rect x="874.10" y="460.90" width="19.40" height="12.70" fill="#4472c4"/>
<rect x="895.10" y="447.30" width="14.00" height="16.10" fill="#4472c4"/>
<rect x="895.10" y="464.70" width="14.00" height="8.90" fill="#4472c4"/>
<rect x="910.20" y="341.00" width="70.60" height="44.60" fill="#ffc000"/>
<rect x="910.20" y="387.10" width="37.40" height="42.20" fill="#ffc000"/>
<rect x="949.00" y="387.10" width="31.80" height="42.20" fill="#ffc000"/>
<rect x="910.20" y="431.00" width="21.40" height="42.60" fill="#ffc000"/>
<rect x="933.10" y="431.00" width="21.90" height="42.60" fill="#ffc000"/>
<rect x="956.50" y="431.00" width="24.30" height="42.60" fill="#ffc000"/>
<rect x="797.00" y="474.90" width="55.70" height="43.00" fill="#636363"/>
<rect x="797.00" y="520.00" width="29.90" height="43.70" fill="#636363"/>
<rect x="828.30" y="520.00" width="24.40" height="43.70" fill="#636363"/>
<rect x="797.00" y="565.10" width="29.90" height="24.30" fill="#636363"/>
<rect x="828.30" y="565.10" width="24.40" height="21.50" fill="#636363"/>
<rect x="797.00" y="590.80" width="29.90" height="22.90" fill="#636363"/>
<rect x="828.30" y="588.00" width="24.40" height="14.70" fill="#636363"/>
<rect x="828.30" y="604.10" width="24.40" height="9.60" fill="#636363"/>
<rect x="854.10" y="474.90" width="42.20" height="42.70" fill="#70ad47"/>
<rect x="898.20" y="474.90" width="21.70" height="42.70" fill="#70ad47"/>
<rect x="854.10" y="519.30" width="25.80" height="26.80" fill="#70ad47"/>
<rect x="881.30" y="519.30" width="18.30" height="26.80" fill="#70ad47"/>
<rect x="901.00" y="519.30" width="18.90" height="27.00" fill="#70ad47"/>
<rect x="854.10" y="547.50" width="25.80" height="22.80" fill="#70ad47"/>
<rect x="881.30" y="547.50" width="18.30" height="22.80" fill="#70ad47"/>
<rect x="901.00" y="548.20" width="18.90" height="11.20" fill="#70ad47"/>
<rect x="901.00" y="560.80" width="14.10" height="9.50" fill="#70ad47"/>
<rect x="916.50" y="560.80" width="3.40" height="9.50" fill="#70ad47"/>
<rect x="921.30" y="474.90" width="59.50" height="42.70" fill="#ed7d31"/>
<rect x="921.30" y="519.30" width="31.40" height="24.60" fill="#ed7d31"/>
<rect x="954.40" y="519.30" width="14.20" height="24.60" fill="#ed7d31"/>
<rect x="970.30" y="519.30" width="10.50" height="24.60" fill="#ed7d31"/>
<rect x="921.30" y="546.10" width="31.40" height="24.20" fill="#ed7d31"/>
<rect x="954.40" y="546.10" width="9.10" height="24.20" fill="#ed7d31"/>
<rect x="965.40" y="546.10" width="15.40" height="10.50" fill="#ed7d31"/>
<rect x="965.40" y="558.50" width="11.60" height="11.80" fill="#ed7d31"/>
<rect x="978.50" y="558.50" width="2.30" height="11.80" fill="#ed7d31"/>
<rect x="854.10" y="572.10" width="41.50" height="41.60" fill="#9e480e"/>
<rect x="897.30" y="572.10" width="29.60" height="41.60" fill="#9e480e"/>
<rect x="928.30" y="572.10" width="18.70" height="41.60" fill="#9e480e"/>
<rect x="948.50" y="572.10" width="15.40" height="27.20" fill="#9e480e"/>
<rect x="965.40" y="572.10" width="15.40" height="27.20" fill="#9e480e"/>
<rect x="948.50" y="601.30" width="20.10" height="12.40" fill="#9e480e"/>
<rect x="970.00" y="601.30" width="10.80" height="8.80" fill="#9e480e"/>
<rect x="970.00" y="611.50" width="10.80" height="2.20" fill="#9e480e"/>
<text x="527.60" y="351.60" font-size="7.6" font-weight="bold" fill="#fff" text-anchor="start">Margaret Peacock</text>
<text x="527.60" y="451.30" font-size="7.6" font-weight="bold" fill="#fff" text-anchor="start">Germany</text>
<text x="586.50" y="451.30" font-size="7.6" font-weight="bold" fill="#fff" text-anchor="start">USA</text>
<text x="527.40" y="539.30" font-size="7.6" font-weight="bold" fill="#fff" text-anchor="start">Brazil</text>
<text x="584.50" y="539.30" font-size="7.6" font-weight="bold" fill="#fff" text-anchor="start">France</text>
<text x="527.40" y="608.40" font-size="7.6" font-weight="bold" fill="#fff" text-anchor="start">Venezu...</text>
<text x="566.50" y="583.30" font-size="7.6" font-weight="bold" fill="#fff" text-anchor="start">Switz...</text>
<text x="566.50" y="608.40" font-size="7.6" font-weight="bold" fill="#fff" text-anchor="start">Canada</text>
<text x="599.50" y="567.40" font-size="7.6" font-weight="bold" fill="#fff" text-anchor="start">A...</text>
<text x="619.20" y="567.40" font-size="7.6" font-weight="bold" fill="#fff" text-anchor="start">It...</text>
<text x="599.50" y="589.30" font-size="7.6" font-weight="bold" fill="#fff" text-anchor="start">Po...</text>
<text x="623.40" y="589.30" font-size="7.6" font-weight="bold" fill="#fff" text-anchor="start">S...</text>
<text x="599.50" y="608.40" font-size="7.6" font-weight="bold" fill="#fff" text-anchor="start">A...</text>
<text x="613.60" y="608.40" font-size="7.6" font-weight="bold" fill="#fff" text-anchor="start">U...</text>
<text x="624.80" y="600.40" font-size="7.6" font-weight="bold" fill="#fff" text-anchor="start">M...</text>
<text x="638.40" y="351.90" font-size="7.6" font-weight="bold" fill="#fff" text-anchor="start">Janet Leverling</text>
<text x="638.40" y="413.50" font-size="7.6" font-weight="bold" fill="#fff" text-anchor="start">Austria</text>
<text x="638.40" y="487.60" font-size="7.6" font-weight="bold" fill="#fff" text-anchor="start">Germany</text>
<text x="708.60" y="405.40" font-size="7.6" font-weight="bold" fill="#fff" text-anchor="start">Canada</text>
<text x="771.30" y="405.40" font-size="7.6" font-weight="bold" fill="#fff" text-anchor="start">Ven...</text>
<text x="708.60" y="453.80" font-size="7.6" font-weight="bold" fill="#fff" text-anchor="start">Swed...</text>
<text x="708.60" y="487.60" font-size="7.6" font-weight="bold" fill="#fff" text-anchor="start">USA</text>
<text x="741.60" y="437.50" font-size="7.6" font-weight="bold" fill="#fff" text-anchor="start">France</text>
<text x="771.30" y="437.50" font-size="7.6" font-weight="bold" fill="#fff" text-anchor="start">Brazil</text>
<text x="741.60" y="466.90" font-size="7.6" font-weight="bold" fill="#fff" text-anchor="start">Mexi...</text>
<text x="741.60" y="487.60" font-size="7.6" font-weight="bold" fill="#fff" text-anchor="start">Irela...</text>
<text x="771.30" y="459.70" font-size="7.6" font-weight="bold" fill="#fff" text-anchor="start">UK</text>
<text x="771.30" y="487.60" font-size="7.6" font-weight="bold" fill="#fff" text-anchor="start">S...</text>
<text x="786.40" y="474.70" font-size="7.6" font-weight="bold" fill="#fff" text-anchor="start">F...</text>
<text x="786.40" y="487.60" font-size="7.6" font-weight="bold" fill="#fff" text-anchor="start">S...</text>
<text x="638.30" y="504.80" font-size="7.6" font-weight="bold" fill="#fff" text-anchor="start">Nancy Davolio</text>
<text x="638.30" y="563.20" font-size="7.6" font-weight="bold" fill="#fff" text-anchor="start">Germany</text>
<text x="638.30" y="608.20" font-size="7.6" font-weight="bold" fill="#fff" text-anchor="start">France</text>
<text x="709.60" y="544.20" font-size="7.6" font-weight="bold" fill="#fff" text-anchor="start">USA</text>
<text x="762.60" y="544.20" font-size="7.6" font-weight="bold" fill="#fff" text-anchor="start">Canada</text>
<text x="709.60" y="608.20" font-size="7.6" font-weight="bold" fill="#fff" text-anchor="start">Brazil</text>
<text x="739.60" y="579.10" font-size="7.6" font-weight="bold" fill="#fff" text-anchor="start">Swed...</text>
<text x="770.60" y="579.10" font-size="7.6" font-weight="bold" fill="#fff" text-anchor="start">Mex...</text>
<text x="739.60" y="608.20" font-size="7.6" font-weight="bold" fill="#fff" text-anchor="start">A...</text>
<text x="759.60" y="608.20" font-size="7.6" font-weight="bold" fill="#fff" text-anchor="start">S...</text>
<text x="771.60" y="596.50" font-size="7.6" font-weight="bold" fill="#fff" text-anchor="start">D...</text>
<text x="786.50" y="596.50" font-size="7.6" font-weight="bold" fill="#fff" text-anchor="start">U...</text>
<text x="771.60" y="608.20" font-size="7.6" font-weight="bold" fill="#fff" text-anchor="start">P...</text>
<text x="786.50" y="608.20" font-size="7.6" font-weight="bold" fill="#fff" text-anchor="start">V...</text>
<text x="800.50" y="351.80" font-size="7.6" font-weight="bold" fill="#fff" text-anchor="start">Andrew Fuller</text>
<text x="800.50" y="410.10" font-size="7.6" font-weight="bold" fill="#fff" text-anchor="start">Germany</text>
<text x="890.50" y="410.10" font-size="7.6" font-weight="bold" fill="#fff" text-anchor="start">Ire...</text>
<text x="800.50" y="468.40" font-size="7.6" font-weight="bold" fill="#fff" text-anchor="start">Aust...</text>
<text x="828.50" y="441.40" font-size="7.6" font-weight="bold" fill="#fff" text-anchor="start">Brazil</text>
<text x="828.50" y="468.40" font-size="7.6" font-weight="bold" fill="#fff" text-anchor="start">USA</text>
<text x="864.50" y="440.30" font-size="7.6" font-weight="bold" fill="#fff" text-anchor="start">Fra...</text>
<text x="890.50" y="440.30" font-size="7.6" font-weight="bold" fill="#fff" text-anchor="start">Fin...</text>
<text x="864.50" y="468.40" font-size="7.6" font-weight="bold" fill="#fff" text-anchor="start">V...</text>
<text x="877.50" y="454.40" font-size="7.6" font-weight="bold" fill="#fff" text-anchor="start">S...</text>
<text x="877.50" y="468.40" font-size="7.6" font-weight="bold" fill="#fff" text-anchor="start">S...</text>
<text x="898.50" y="458.20" font-size="7.6" font-weight="bold" fill="#fff" text-anchor="start">I...</text>
<text x="913.60" y="351.70" font-size="7.6" font-weight="bold" fill="#fff" text-anchor="start">Laura Callahan</text>
<text x="913.60" y="380.40" font-size="7.6" font-weight="bold" fill="#fff" text-anchor="start">USA</text>
<text x="913.60" y="424.10" font-size="7.6" font-weight="bold" fill="#fff" text-anchor="start">UK</text>
<text x="913.60" y="468.40" font-size="7.6" font-weight="bold" fill="#fff" text-anchor="start">Br...</text>
<text x="936.50" y="468.40" font-size="7.6" font-weight="bold" fill="#fff" text-anchor="start">G...</text>
<text x="800.40" y="512.70" font-size="7.6" font-weight="bold" fill="#fff" text-anchor="start">UK</text>
<text x="800.40" y="558.50" font-size="7.6" font-weight="bold" fill="#fff" text-anchor="start">Brazil</text>
<text x="831.70" y="558.50" font-size="7.6" font-weight="bold" fill="#fff" text-anchor="start">USA</text>
<text x="800.40" y="584.20" font-size="7.6" font-weight="bold" fill="#fff" text-anchor="start">France</text>
<text x="831.70" y="581.40" font-size="7.6" font-weight="bold" fill="#fff" text-anchor="start">Sw...</text>
<text x="800.40" y="608.50" font-size="7.6" font-weight="bold" fill="#fff" text-anchor="start">Vene...</text>
<text x="831.70" y="597.50" font-size="7.6" font-weight="bold" fill="#fff" text-anchor="start">Por...</text>
<text x="831.70" y="608.50" font-size="7.6" font-weight="bold" fill="#fff" text-anchor="start">Me...</text>
<text x="857.50" y="485.60" font-size="7.6" font-weight="bold" fill="#fff" text-anchor="start">Michael Suyama</text>
<text x="857.50" y="512.40" font-size="7.6" font-weight="bold" fill="#fff" text-anchor="start">Austria</text>
<text x="901.60" y="512.40" font-size="7.6" font-weight="bold" fill="#fff" text-anchor="start">USA</text>
<text x="857.50" y="540.90" font-size="7.6" font-weight="bold" fill="#fff" text-anchor="start">Pola...</text>
<text x="884.70" y="540.90" font-size="7.6" font-weight="bold" fill="#fff" text-anchor="start">S...</text>
<text x="904.40" y="541.10" font-size="7.6" font-weight="bold" fill="#fff" text-anchor="start">Ir...</text>
<text x="857.50" y="565.10" font-size="7.6" font-weight="bold" fill="#fff" text-anchor="start">Den...</text>
<text x="884.70" y="565.10" font-size="7.6" font-weight="bold" fill="#fff" text-anchor="start">S...</text>
<text x="904.40" y="554.20" font-size="7.6" font-weight="bold" fill="#fff" text-anchor="start">G...</text>
<text x="904.40" y="565.10" font-size="7.6" font-weight="bold" fill="#fff" text-anchor="start">F...</text>
<text x="924.70" y="512.40" font-size="7.6" font-weight="bold" fill="#fff" text-anchor="start">Germany</text>
<text x="924.70" y="538.70" font-size="7.6" font-weight="bold" fill="#fff" text-anchor="start">France</text>
<text x="957.80" y="538.70" font-size="7.6" font-weight="bold" fill="#fff" text-anchor="start">S...</text>
<text x="973.70" y="538.70" font-size="7.6" font-weight="bold" fill="#fff" text-anchor="start">B...</text>
<text x="924.70" y="565.10" font-size="7.6" font-weight="bold" fill="#fff" text-anchor="start">UK</text>
<text x="957.80" y="565.10" font-size="7.6" font-weight="bold" fill="#fff" text-anchor="start">S...</text>
<text x="968.80" y="551.40" font-size="7.6" font-weight="bold" fill="#fff" text-anchor="start">I...</text>
<text x="968.80" y="565.10" font-size="7.6" font-weight="bold" fill="#fff" text-anchor="start">U...</text>
<text x="857.50" y="582.80" font-size="7.6" font-weight="bold" fill="#fff" text-anchor="start">Robert King</text>
<text x="857.50" y="608.50" font-size="7.6" font-weight="bold" fill="#fff" text-anchor="start">Austria</text>
<text x="900.70" y="608.50" font-size="7.6" font-weight="bold" fill="#fff" text-anchor="start">USA</text>
<text x="931.70" y="608.50" font-size="7.6" font-weight="bold" fill="#fff" text-anchor="start">Br...</text>
<text x="951.90" y="594.10" font-size="7.6" font-weight="bold" fill="#fff" text-anchor="start">S...</text>
<text x="968.80" y="594.10" font-size="7.6" font-weight="bold" fill="#fff" text-anchor="start">N...</text>
<text x="951.90" y="608.50" font-size="7.6" font-weight="bold" fill="#fff" text-anchor="start">UK</text>
<text x="818.00" y="484.90" font-size="7.6" font-weight="bold" fill="#fff" text-anchor="middle">Steven</text>
<text x="800.40" y="494.80" font-size="7.6" font-weight="bold" fill="#fff" text-anchor="start">Buchanan</text>
<text x="943.50" y="484.90" font-size="7.6" font-weight="bold" fill="#fff" text-anchor="middle">Anne</text>
<text x="924.70" y="494.80" font-size="7.6" font-weight="bold" fill="#fff" text-anchor="start">Dodsworth</text>
<path d="M352.80 704.40 A91.7 91.7 0 0 1 370.30 886.12 L361.75 842.14 A46.9 46.9 0 0 0 352.80 749.20 Z" fill="#ed7d31" stroke="#fff" stroke-width="1.3"/>
<path d="M370.30 886.12 A91.7 91.7 0 0 1 271.09 754.47 L311.01 774.81 A46.9 46.9 0 0 0 361.75 842.14 Z" fill="#a5a5a5" stroke="#fff" stroke-width="1.3"/>
<path d="M271.09 754.47 A91.7 91.7 0 0 1 352.80 704.40 L352.80 749.20 A46.9 46.9 0 0 0 311.01 774.81 Z" fill="#4472c4" stroke="#fff" stroke-width="1.3"/>
<path d="M352.80 658.70 A137.4 137.4 0 0 1 464.94 716.70 L427.64 743.11 A91.7 91.7 0 0 0 352.80 704.40 Z" fill="#ed7d31" stroke="#fff" stroke-width="1.3"/>
<path d="M464.94 716.70 A137.4 137.4 0 0 1 487.68 769.88 L442.82 778.60 A91.7 91.7 0 0 0 427.64 743.11 Z" fill="#ed7d31" stroke="#fff" stroke-width="1.3"/>
<path d="M487.68 769.88 A137.4 137.4 0 0 1 486.29 828.64 L441.89 817.82 A91.7 91.7 0 0 0 442.82 778.60 Z" fill="#ed7d31" stroke="#fff" stroke-width="1.3"/>
<path d="M486.29 828.64 A137.4 137.4 0 0 1 464.38 876.28 L427.27 849.61 A91.7 91.7 0 0 0 441.89 817.82 Z" fill="#ed7d31" stroke="#fff" stroke-width="1.3"/>
<path d="M464.38 876.28 A137.4 137.4 0 0 1 442.94 899.80 L412.96 865.31 A91.7 91.7 0 0 0 427.27 849.61 Z" fill="#ed7d31" stroke="#fff" stroke-width="1.3"/>
<path d="M442.94 899.80 A137.4 137.4 0 0 1 419.20 916.39 L397.12 876.38 A91.7 91.7 0 0 0 412.96 865.31 Z" fill="#ed7d31" stroke="#fff" stroke-width="1.3"/>
<path d="M419.20 916.39 A137.4 137.4 0 0 1 402.49 924.20 L385.96 881.59 A91.7 91.7 0 0 0 397.12 876.38 Z" fill="#ed7d31" stroke="#fff" stroke-width="1.3"/>
<path d="M402.49 924.20 A137.4 137.4 0 0 1 388.82 928.69 L376.84 884.59 A91.7 91.7 0 0 0 385.96 881.59 Z" fill="#ed7d31" stroke="#fff" stroke-width="1.3"/>
<path d="M388.82 928.69 A137.4 137.4 0 0 1 379.02 930.98 L370.30 886.12 A91.7 91.7 0 0 0 376.84 884.59 Z" fill="#ed7d31" stroke="#fff" stroke-width="1.3"/>
<path d="M379.02 930.98 A137.4 137.4 0 0 1 291.49 919.06 L311.88 878.17 A91.7 91.7 0 0 0 370.30 886.12 Z" fill="#a5a5a5" stroke="#fff" stroke-width="1.3"/>
<path d="M291.49 919.06 A137.4 137.4 0 0 1 249.58 886.78 L283.91 856.62 A91.7 91.7 0 0 0 311.88 878.17 Z" fill="#a5a5a5" stroke="#fff" stroke-width="1.3"/>
<path d="M249.58 886.78 A137.4 137.4 0 0 1 226.70 850.67 L268.64 832.52 A91.7 91.7 0 0 0 283.91 856.62 Z" fill="#a5a5a5" stroke="#fff" stroke-width="1.3"/>
<path d="M226.70 850.67 A137.4 137.4 0 0 1 216.91 816.41 L262.11 809.65 A91.7 91.7 0 0 0 268.64 832.52 Z" fill="#a5a5a5" stroke="#fff" stroke-width="1.3"/>
<path d="M216.91 816.41 A137.4 137.4 0 0 1 215.48 791.30 L261.16 792.90 A91.7 91.7 0 0 0 262.11 809.65 Z" fill="#a5a5a5" stroke="#fff" stroke-width="1.3"/>
<path d="M215.48 791.30 A137.4 137.4 0 0 1 217.70 771.06 L262.64 779.39 A91.7 91.7 0 0 0 261.16 792.90 Z" fill="#a5a5a5" stroke="#fff" stroke-width="1.3"/>
<path d="M217.70 771.06 A137.4 137.4 0 0 1 222.73 751.82 L265.99 766.55 A91.7 91.7 0 0 0 262.64 779.39 Z" fill="#a5a5a5" stroke="#fff" stroke-width="1.3"/>
<path d="M222.73 751.82 A137.4 137.4 0 0 1 227.38 740.00 L269.09 758.66 A91.7 91.7 0 0 0 265.99 766.55 Z" fill="#a5a5a5" stroke="#fff" stroke-width="1.3"/>
<path d="M227.38 740.00 A137.4 137.4 0 0 1 230.38 733.72 L271.09 754.47 A91.7 91.7 0 0 0 269.09 758.66 Z" fill="#a5a5a5" stroke="#fff" stroke-width="1.3"/>
<path d="M230.38 733.72 A137.4 137.4 0 0 1 253.13 701.52 L286.28 732.98 A91.7 91.7 0 0 0 271.09 754.47 Z" fill="#4472c4" stroke="#fff" stroke-width="1.3"/>
<path d="M253.13 701.52 A137.4 137.4 0 0 1 274.38 683.27 L300.47 720.80 A91.7 91.7 0 0 0 286.28 732.98 Z" fill="#4472c4" stroke="#fff" stroke-width="1.3"/>
<path d="M274.38 683.27 A137.4 137.4 0 0 1 299.56 669.44 L317.26 711.57 A91.7 91.7 0 0 0 300.47 720.80 Z" fill="#4472c4" stroke="#fff" stroke-width="1.3"/>
<path d="M299.56 669.44 A137.4 137.4 0 0 1 322.36 662.11 L332.48 706.68 A91.7 91.7 0 0 0 317.26 711.57 Z" fill="#4472c4" stroke="#fff" stroke-width="1.3"/>
<path d="M322.36 662.11 A137.4 137.4 0 0 1 334.63 659.91 L340.67 705.21 A91.7 91.7 0 0 0 332.48 706.68 Z" fill="#4472c4" stroke="#fff" stroke-width="1.3"/>
<path d="M334.63 659.91 A137.4 137.4 0 0 1 345.13 658.91 L347.68 704.54 A91.7 91.7 0 0 0 340.67 705.21 Z" fill="#4472c4" stroke="#fff" stroke-width="1.3"/>
<path d="M345.13 658.91 A137.4 137.4 0 0 1 348.96 658.75 L350.24 704.44 A91.7 91.7 0 0 0 347.68 704.54 Z" fill="#4472c4" stroke="#fff" stroke-width="1.3"/>
<path d="M348.96 658.75 A137.4 137.4 0 0 1 351.12 658.71 L351.68 704.41 A91.7 91.7 0 0 0 350.24 704.44 Z" fill="#4472c4" stroke="#fff" stroke-width="1.3"/>
<path d="M351.12 658.71 A137.4 137.4 0 0 1 352.80 658.70 L352.80 704.40 A91.7 91.7 0 0 0 351.68 704.41 Z" fill="#4472c4" stroke="#fff" stroke-width="1.3"/>
<g transform="translate(421.72 788.86) rotate(-6.0)"><text x="0" y="2.94" font-size="8.4" fill="#fff" text-anchor="middle">31/12/2011</text></g>
<g transform="translate(318.15 736.08) rotate(60.0)"><text x="0" y="2.94" font-size="8.4" fill="#fff" text-anchor="middle">31/12/2010</text></g>
<g transform="translate(297.45 837.81) rotate(-52.0)"><text x="0" y="2.94" font-size="8.4" fill="#fff" text-anchor="middle">31/12/2012</text></g>
<g transform="translate(404.78 694.08) rotate(-63.0)"><text x="0" y="-1.89" font-size="8.4" fill="#fff" text-anchor="middle">Margaret</text><text x="0" y="7.77" font-size="8.4" fill="#fff" text-anchor="middle">Peacock</text></g>
<g transform="translate(458.20 751.36) rotate(-23.0)"><text x="0" y="-1.89" font-size="8.4" fill="#fff" text-anchor="middle">Nancy</text><text x="0" y="7.77" font-size="8.4" fill="#fff" text-anchor="middle">Davolio</text></g>
<g transform="translate(467.27 798.70) rotate(0.0)"><text x="0" y="-1.89" font-size="8.4" fill="#fff" text-anchor="middle">Andrew</text><text x="0" y="7.77" font-size="8.4" fill="#fff" text-anchor="middle">Fuller</text></g>
<g transform="translate(456.82 843.95) rotate(25.0)"><text x="0" y="-1.89" font-size="8.4" fill="#fff" text-anchor="middle">Janet</text><text x="0" y="7.77" font-size="8.4" fill="#fff" text-anchor="middle">Leverling</text></g>
<g transform="translate(437.49 873.16) rotate(42.0)"><text x="0" y="-1.89" font-size="8.4" fill="#fff" text-anchor="middle">Laura</text><text x="0" y="7.77" font-size="8.4" fill="#fff" text-anchor="middle">Callahan</text></g>
<g transform="translate(418.47 889.89) rotate(55.0)"><text x="0" y="2.94" font-size="8.4" fill="#fff" text-anchor="middle">Michael...</text></g>
<g transform="translate(401.19 899.87) rotate(65.0)"><text x="0" y="2.94" font-size="8.4" fill="#fff" text-anchor="middle">Anne...</text></g>
<g transform="translate(337.46 909.57) rotate(-82.0)"><text x="0" y="-1.89" font-size="8.4" fill="#fff" text-anchor="middle">Janet</text><text x="0" y="7.77" font-size="8.4" fill="#fff" text-anchor="middle">Leverling</text></g>
<g transform="translate(282.94 886.82) rotate(-52.0)"><text x="0" y="-1.89" font-size="8.4" fill="#fff" text-anchor="middle">Margaret</text><text x="0" y="7.77" font-size="8.4" fill="#fff" text-anchor="middle">Peacock</text></g>
<g transform="translate(256.12 857.45) rotate(-32.0)"><text x="0" y="-1.89" font-size="8.4" fill="#fff" text-anchor="middle">Andrew</text><text x="0" y="7.77" font-size="8.4" fill="#fff" text-anchor="middle">Fuller</text></g>
<g transform="translate(242.74 827.66) rotate(-16.0)"><text x="0" y="-1.89" font-size="8.4" fill="#fff" text-anchor="middle">Nancy</text><text x="0" y="7.77" font-size="8.4" fill="#fff" text-anchor="middle">Davolio</text></g>
<g transform="translate(238.49 802.69) rotate(-3.0)"><text x="0" y="2.94" font-size="8.4" fill="#fff" text-anchor="middle">Robert King</text></g>
<g transform="translate(238.97 783.73) rotate(6.0)"><text x="0" y="2.94" font-size="8.4" fill="#fff" text-anchor="middle">Laura...</text></g>
<g transform="translate(242.00 767.24) rotate(14.0)"><text x="0" y="2.94" font-size="8.4" fill="#fff" text-anchor="middle">Anne...</text></g>
<g transform="translate(259.24 730.10) rotate(35.0)"><text x="0" y="-1.89" font-size="8.4" fill="#fff" text-anchor="middle">Nancy</text><text x="0" y="7.77" font-size="8.4" fill="#fff" text-anchor="middle">Davolio</text></g>
<g transform="translate(278.13 709.29) rotate(49.0)"><text x="0" y="2.94" font-size="8.4" fill="#fff" text-anchor="middle">Janet...</text></g>
<g transform="translate(297.64 695.76) rotate(61.0)"><text x="0" y="2.94" font-size="8.4" fill="#fff" text-anchor="middle">Steven...</text></g>
<g transform="translate(317.80 687.08) rotate(72.0)"><text x="0" y="2.94" font-size="8.4" fill="#fff" text-anchor="middle">Margaret...</text></g>
<g stroke="#fff" stroke-width="0.35" stroke-linejoin="round">
<path d="M718.2 772.6 L718.9 765.8 L726.2 765.2 L726.5 762.4 L723.4 759.6 L726.2 758.4 L729.0 756.9 L731.2 756.2 L732.1 754.6 L735.2 753.5 L734.8 750.2 L736.8 749.5 L736.9 752.4 L739.2 753.0 L743.6 752.6 L746.1 751.9 L745.8 749.7 L748.4 750.0 L748.0 747.6 L751.4 747.6 L753.0 746.9 L747.1 747.1 L745.6 746.0 L745.1 743.0 L748.1 741.6 L745.2 741.1 L742.1 744.5 L743.2 746.8 L742.0 750.3 L740.3 751.3 L738.8 750.8 L737.5 748.7 L736.2 748.1 L732.8 749.0 L731.8 746.0 L733.4 744.0 L737.2 740.9 L739.6 738.5 L742.9 737.0 L746.4 736.1 L751.2 736.7 L758.9 739.3 L760.1 740.4 L753.8 740.4 L756.8 742.4 L762.7 740.9 L761.7 738.5 L768.7 738.5 L772.4 738.1 L780.4 738.5 L778.6 734.7 L782.6 736.1 L784.2 738.5 L786.7 734.7 L790.2 732.8 L797.4 731.1 L798.8 730.1 L810.0 733.8 L820.2 733.8 L831.0 734.7 L839.9 735.6 L849.7 737.0 L857.3 737.0 L867.3 738.5 L872.0 741.4 L871.9 742.4 L872.7 746.6 L865.8 747.1 L868.1 749.7 L870.2 756.8 L864.2 751.3 L858.5 748.1 L849.4 747.6 L850.0 753.5 L855.5 755.7 L858.3 760.1 L857.5 765.8 L854.0 766.3 L853.9 768.6 L856.6 774.6 L853.9 775.4 L852.8 772.0 L850.2 769.7 L846.5 769.2 L843.1 770.3 L845.6 772.6 L849.1 772.6 L847.9 775.4 L851.7 780.0 L852.1 782.9 L850.9 785.8 L848.8 788.1 L845.0 789.8 L842.1 790.9 L839.9 790.3 L838.2 792.6 L842.5 801.2 L838.6 804.9 L836.4 803.0 L833.4 799.5 L832.7 803.5 L837.4 813.3 L834.7 811.8 L831.8 806.1 L830.4 796.7 L826.7 796.1 L823.3 790.9 L819.6 790.0 L817.7 791.5 L812.1 796.7 L811.9 800.1 L809.6 805.8 L807.9 804.1 L804.1 795.5 L803.0 790.3 L800.2 788.9 L796.8 786.6 L791.6 786.1 L786.4 785.4 L785.6 784.0 L783.1 784.4 L779.1 780.6 L776.5 780.6 L779.1 785.2 L780.9 787.1 L785.3 785.0 L786.0 787.3 L789.4 789.2 L787.1 793.4 L782.1 796.1 L775.0 800.3 L772.9 800.3 L768.2 790.3 L763.5 782.9 L762.9 781.7 L760.7 780.6 L762.3 779.1 L762.8 776.6 L763.5 773.7 L759.4 773.2 L756.4 773.2 L753.6 769.7 L750.0 768.6 L751.3 771.4 L750.0 773.2 L748.3 770.9 L746.5 767.5 L743.0 765.2 L740.4 762.9 L739.3 764.1 L743.1 767.5 L745.7 768.9 L743.1 771.4 L742.8 769.2 L739.7 767.1 L737.2 764.6 L735.3 764.6 L732.4 765.5 L730.5 765.8 L730.7 766.9 L728.1 768.6 L727.1 770.9 L725.6 772.8 L722.1 773.7 L721.2 772.6 L718.2 772.6 Z" fill="#d9d9d9"/>
<path d="M709.9 790.9 L709.7 798.1 L710.2 800.9 L713.9 804.1 L716.0 807.0 L719.6 809.8 L725.5 809.5 L730.8 807.8 L736.6 809.8 L737.7 812.1 L737.2 816.1 L740.3 821.3 L741.9 827.6 L740.0 834.5 L743.0 846.0 L746.1 854.0 L747.6 854.9 L753.7 853.8 L758.1 850.5 L761.4 844.8 L764.3 842.5 L764.3 839.1 L770.1 832.8 L770.4 827.0 L768.9 822.5 L771.1 816.7 L775.3 812.7 L778.5 809.3 L781.6 801.5 L773.5 801.8 L772.3 797.8 L768.9 794.4 L766.4 790.9 L764.3 787.5 L762.5 783.5 L760.7 780.6 L759.0 778.9 L752.9 778.7 L747.9 779.7 L746.9 780.3 L743.3 778.9 L739.2 776.6 L738.0 772.6 L735.5 772.6 L730.6 772.8 L726.6 774.3 L722.1 774.0 L718.0 777.7 L714.3 783.5 L709.9 790.9 Z" fill="#d9d9d9"/>
<path d="M773.0 843.7 L776.4 843.7 L780.5 832.8 L779.6 828.8 L774.3 833.6 L772.6 840.2 L773.0 843.7 Z" fill="#d9d9d9"/>
<path d="M846.0 840.2 L844.5 844.8 L843.2 853.8 L845.7 855.1 L851.7 853.8 L858.3 851.2 L862.8 854.9 L865.4 855.7 L866.3 858.6 L871.1 859.7 L876.0 858.0 L884.9 847.1 L885.6 843.7 L880.6 836.8 L880.5 832.2 L878.1 827.4 L876.1 833.3 L870.9 832.8 L872.1 828.8 L867.4 827.8 L863.2 832.0 L860.2 831.1 L855.3 835.4 L846.0 840.2 Z" fill="#d9d9d9"/>
<path d="M868.8 861.8 L871.9 862.0 L869.3 864.6 L867.7 864.8 L868.8 861.8 Z" fill="#d9d9d9"/>
<path d="M900.5 854.6 L904.2 858.0 L901.0 860.3 L897.1 862.5 L896.1 861.4 L899.0 859.1 L900.5 854.6 Z" fill="#d9d9d9"/>
<path d="M895.6 861.8 L896.4 862.9 L890.8 865.9 L886.8 868.3 L885.0 867.6 L895.6 861.8 Z" fill="#d9d9d9"/>
<path d="M828.6 808.7 L831.5 810.4 L837.9 817.3 L839.9 821.7 L835.8 819.6 L828.6 808.7 Z" fill="#d9d9d9"/>
<path d="M839.1 822.8 L848.8 823.8 L848.7 825.1 L839.8 823.9 L839.1 822.8 Z" fill="#d9d9d9"/>
<path d="M843.3 812.9 L845.4 812.9 L849.5 809.4 L851.5 807.0 L853.8 809.3 L852.8 813.9 L850.6 819.4 L845.3 818.4 L843.3 816.1 L843.3 812.9 Z" fill="#d9d9d9"/>
<path d="M853.9 813.9 L860.3 813.5 L856.0 816.1 L858.0 820.7 L854.8 821.3 L853.9 813.9 Z" fill="#d9d9d9"/>
<path d="M866.6 816.1 L870.8 819.0 L877.2 818.0 L883.9 821.9 L886.5 827.0 L878.8 825.3 L873.6 824.5 L868.6 819.6 L866.6 816.1 Z" fill="#d9d9d9"/>
<path d="M853.0 793.8 L855.7 794.0 L858.3 800.7 L861.0 807.0 L856.8 807.0 L857.5 803.0 L853.8 798.4 L853.0 793.8 Z" fill="#d9d9d9"/>
<path d="M859.5 779.1 L863.3 776.4 L867.7 774.9 L867.0 770.9 L864.9 767.5 L864.6 769.2 L863.5 772.6 L860.4 774.3 L858.4 776.6 L859.5 779.1 Z" fill="#d9d9d9"/>
<path d="M863.4 767.5 L867.4 765.5 L861.8 762.9 L863.4 767.5 Z" fill="#d9d9d9"/>
<path d="M812.1 807.5 L814.2 806.4 L812.4 803.8 L812.1 807.5 Z" fill="#d9d9d9"/>
<path d="M852.3 789.2 L853.5 786.3 L852.6 786.3 L852.3 789.2 Z" fill="#d9d9d9"/>
<path d="M735.1 729.8 L739.4 731.0 L745.3 729.8 L740.7 727.8 L734.9 728.6 L735.1 729.8 Z" fill="#d9d9d9"/>
<path d="M766.5 735.6 L770.8 736.5 L775.1 731.1 L769.5 731.1 L766.5 735.6 Z" fill="#d9d9d9"/>
<path d="M708.3 741.4 L713.3 740.4 L716.7 741.9 L712.8 743.6 L709.7 743.0 L708.3 741.4 Z" fill="#d9d9d9"/>
<path d="M678.2 729.4 L689.3 726.8 L702.7 725.8 L713.7 726.4 L719.9 727.1 L713.5 731.5 L713.5 735.1 L710.8 737.0 L707.4 738.5 L702.6 739.0 L695.3 741.9 L691.1 747.1 L686.7 745.5 L685.7 741.9 L685.9 738.0 L686.2 734.7 L684.0 731.5 L678.2 729.4 Z" fill="#d9d9d9"/>
<path d="M625.9 907.5 L604.9 900.2 L623.7 899.3 L627.5 897.6 L647.9 896.7 L654.2 895.8 L673.3 896.7 L678.0 893.0 L680.3 887.0 L678.7 890.0 L682.7 896.7 L696.9 900.2 L713.3 897.6 L727.6 894.4 L750.5 893.0 L766.4 891.5 L781.0 893.0 L789.7 891.5 L806.1 890.5 L821.2 891.0 L836.8 891.0 L848.1 893.9 L852.4 895.8 L838.2 901.0 L850.3 900.2 L829.3 907.5 Z" fill="#d9d9d9"/>
<path d="M630.6 798.4 L634.3 794.6 L635.6 793.8 L635.3 796.7 L639.4 796.9 L640.1 797.9 L639.5 802.4 L641.4 804.7 L644.1 804.1 L645.8 805.3 L645.0 806.7 L642.4 806.4 L639.8 805.5 L637.0 803.5 L635.4 800.1 L630.6 798.4 Z" fill="#d9d9d9"/>
<path d="M639.3 789.9 L643.6 788.5 L647.5 790.3 L650.3 791.8 L646.6 792.2 L644.5 790.0 L639.3 789.9 Z" fill="#d9d9d9"/>
<path d="M649.7 793.8 L655.6 792.3 L656.1 793.8 L653.3 794.8 L649.7 793.8 Z" fill="#d9d9d9"/>
<path d="M645.8 805.3 L647.9 803.0 L652.2 800.8 L655.8 802.6 L661.1 802.7 L664.1 805.3 L667.2 808.1 L672.5 809.3 L674.5 812.9 L676.1 816.1 L680.9 817.9 L686.2 818.4 L690.5 821.3 L690.6 825.3 L688.6 828.8 L686.7 834.5 L685.9 838.5 L684.1 841.4 L681.0 842.5 L677.7 845.4 L677.8 847.7 L675.8 850.5 L673.9 854.0 L670.6 855.1 L670.8 858.6 L666.7 859.7 L664.4 862.0 L665.4 863.7 L664.8 866.5 L664.0 868.2 L666.0 869.9 L664.7 872.7 L665.6 874.6 L668.7 877.6 L665.5 877.6 L660.5 874.3 L657.1 869.9 L657.3 865.4 L654.7 857.4 L655.3 851.7 L654.5 847.1 L654.5 841.4 L654.2 836.2 L648.8 832.2 L647.0 829.9 L641.8 821.9 L642.7 817.3 L641.6 815.6 L643.2 813.9 L644.9 812.1 L645.5 808.1 L645.8 805.3 Z" fill="#d9d9d9"/>
<path d="M611.5 759.7 L613.5 759.0 L639.5 759.0 L644.1 760.1 L648.0 761.8 L649.3 763.1 L647.3 766.9 L651.7 765.4 L654.4 764.6 L656.2 763.5 L659.6 763.5 L662.5 760.8 L664.0 761.1 L663.8 763.7 L659.8 765.8 L659.5 767.2 L655.4 768.5 L652.2 772.6 L652.2 774.3 L649.9 775.4 L645.6 778.7 L645.2 784.0 L644.5 786.1 L643.4 784.6 L642.9 782.3 L642.0 780.6 L640.1 780.1 L636.5 780.4 L635.1 781.7 L631.7 781.1 L627.8 783.5 L627.5 785.2 L625.5 783.5 L624.6 780.9 L621.0 781.2 L619.8 778.5 L615.0 779.1 L611.7 777.7 L609.3 777.7 L608.6 776.0 L606.7 775.3 L606.4 772.0 L606.5 768.8 L607.8 765.8 L610.5 762.1 L611.5 759.7 Z" fill="#6d88bd"/>
<path d="M619.5 737.4 L610.2 735.8 L598.8 738.5 L593.0 741.3 L592.5 743.8 L588.9 745.5 L588.4 748.7 L591.0 749.4 L584.4 752.1 L594.9 749.7 L598.6 747.6 L604.4 746.6 L608.1 747.1 Z" fill="#6d88bd"/>
<path d="M584.4 752.1 L572.1 755.1 L565.5 756.2 L571.6 755.6 L582.5 753.0 Z" fill="#6d88bd"/>
<path d="M619.5 737.4 L608.1 747.1 L610.4 748.1 L611.2 750.8 L611.9 753.0 L610.6 756.8 L613.5 759.0 L639.5 759.0 L644.1 760.1 L648.0 761.8 L649.3 763.1 L647.3 766.9 L651.7 765.4 L654.4 764.6 L656.2 763.5 L659.6 763.5 L662.5 760.8 L664.0 761.1 L663.8 763.7 L664.5 764.6 L669.7 762.9 L671.1 761.8 L666.8 761.8 L667.8 759.0 L672.5 760.1 L677.2 755.7 L676.7 753.5 L674.0 751.3 L673.1 746.8 L668.0 748.4 L667.2 746.0 L663.0 744.7 L661.9 747.1 L661.0 750.3 L657.3 753.0 L655.2 756.2 L653.3 754.7 L650.8 751.9 L647.0 750.3 L646.8 748.1 L648.4 745.5 L654.3 743.0 L658.6 740.4 L660.9 738.5 L655.1 738.0 L652.7 739.0 L650.2 739.2 L643.8 738.5 L637.8 739.1 L634.0 737.5 L630.0 737.0 L622.7 738.0 L619.5 737.4 Z" fill="#b3c3e2"/>
<path d="M678.4 740.4 L674.4 745.0 L667.2 744.5 L663.2 743.0 L666.0 739.0 L659.7 737.0 L665.6 733.8 L673.0 735.6 L678.4 740.4 Z" fill="#b3c3e2"/>
<path d="M639.9 735.1 L652.7 734.2 L649.2 738.5 L639.4 739.0 L639.9 735.1 Z" fill="#b3c3e2"/>
<path d="M665.3 730.7 L677.2 729.8 L688.0 726.8 L677.3 726.1 L665.9 727.5 L665.3 730.7 Z" fill="#b3c3e2"/>
<path d="M634.7 735.1 L639.5 736.1 L644.3 733.3 L639.1 732.8 Z" fill="#b3c3e2"/>
<path d="M658.1 733.3 L669.7 733.3 L671.7 731.1 L660.6 731.1 Z" fill="#b3c3e2"/>
<path d="M650.2 731.5 L656.7 731.9 L660.8 729.8 L651.3 729.8 Z" fill="#b3c3e2"/>
<path d="M609.3 777.7 L611.7 777.7 L615.0 779.1 L619.8 778.5 L621.0 781.2 L624.6 780.9 L625.5 783.5 L627.5 785.2 L626.0 789.8 L627.3 793.2 L628.8 794.1 L632.5 793.4 L633.4 790.9 L637.1 790.3 L635.6 793.8 L634.3 794.6 L631.6 796.7 L630.6 798.4 L628.5 796.4 L624.8 796.7 L619.9 794.1 L617.7 791.5 L618.4 788.6 L615.3 785.4 L612.8 781.2 L611.2 779.2 L612.2 783.5 L614.1 788.6 L611.8 786.9 L610.8 782.9 L609.3 777.7 Z" fill="#d2dcf0"/>
<path d="M664.0 809.0 L664.5 813.3 L668.2 812.7 L672.4 812.5 L673.0 810.4 L674.5 812.9 L676.1 816.1 L680.9 817.9 L686.2 818.4 L690.5 821.3 L690.6 825.3 L688.6 828.8 L686.7 834.5 L685.9 838.5 L684.1 841.4 L681.0 842.5 L677.7 845.4 L677.8 847.7 L675.8 850.5 L673.8 853.6 L671.2 850.5 L668.9 849.6 L671.1 846.0 L671.4 844.2 L670.0 840.8 L667.1 837.9 L666.8 833.7 L663.9 830.7 L659.0 827.0 L654.2 827.6 L651.0 825.9 L649.6 823.4 L653.4 819.8 L653.8 816.1 L656.5 813.3 L659.7 811.0 L661.9 810.2 L664.0 809.0 Z" fill="#8fa5d0"/>
<path d="M651.5 801.5 L652.4 801.8 L652.0 803.5 L655.8 802.6 L661.1 802.7 L663.2 802.8 L664.1 805.3 L663.0 807.0 L663.5 809.3 L661.9 810.2 L659.7 811.0 L656.5 813.3 L656.1 808.1 L653.5 807.0 L650.9 806.7 L650.4 804.1 L651.5 801.5 Z" fill="#a6b8dc"/>
<path d="M659.6 840.2 L662.7 840.5 L668.2 844.0 L671.4 844.2 L671.1 846.0 L668.9 849.6 L668.9 853.4 L670.6 855.1 L670.8 858.6 L666.7 859.7 L664.4 862.0 L665.4 863.7 L664.8 866.5 L664.0 868.2 L666.0 869.9 L664.7 872.7 L665.6 874.6 L668.7 877.6 L666.7 877.5 L661.3 872.1 L659.2 865.4 L657.4 860.8 L657.4 856.3 L656.5 849.4 L657.2 846.0 L658.1 841.4 L659.6 840.2 Z" fill="#d8e1f2"/>
<path d="M733.1 755.9 L733.7 753.9 L735.2 753.6 L736.0 752.6 L737.4 753.5 L740.3 753.6 L741.0 755.1 L741.3 756.8 L738.8 757.6 L740.4 759.2 L739.8 760.7 L737.0 760.7 L734.7 760.6 L735.2 759.0 L733.4 758.4 L733.1 755.9 Z" fill="#264c8c"/>
<path d="M723.2 759.6 L726.2 759.3 L729.0 756.9 L731.5 758.0 L735.2 759.0 L734.7 760.6 L734.0 761.9 L734.9 762.7 L734.8 764.8 L730.7 765.8 L730.6 766.4 L725.9 765.4 L726.5 762.4 L725.3 760.9 L723.2 759.6 Z" fill="#7f97c8"/>
<path d="M718.7 765.8 L725.9 765.4 L730.6 766.4 L728.4 768.4 L727.3 769.8 L727.6 770.6 L725.6 772.8 L722.1 773.7 L720.3 772.4 L718.8 772.6 L719.0 769.2 L718.7 765.8 Z" fill="#d3ddf1"/>
<path d="M722.3 757.9 L729.0 756.7 L729.1 754.9 L727.6 754.1 L726.2 751.8 L725.9 749.5 L724.7 748.6 L723.3 748.6 L722.2 750.8 L723.2 752.4 L724.9 753.5 L723.3 754.8 L722.8 756.0 L724.7 756.4 L722.3 757.9 Z" fill="#9fb2da"/>
<path d="M718.5 756.1 L722.2 755.5 L722.2 753.6 L722.4 752.2 L720.3 752.2 L718.7 753.5 L718.5 756.1 Z" fill="#c9d5ec"/>
<path d="M731.9 748.7 L732.2 745.0 L735.7 743.0 L739.0 739.5 L741.4 737.2 L745.0 736.4 L749.5 736.2 L751.2 737.0 L749.6 738.0 L746.8 737.8 L743.0 738.0 L740.1 739.0 L737.3 741.9 L737.9 744.0 L737.9 747.1 L737.0 748.2 L734.5 749.2 L731.9 748.7 Z" fill="#c8d4ec"/>
<path d="M737.0 748.2 L737.9 747.1 L737.9 744.0 L737.3 741.9 L740.1 739.0 L743.0 738.0 L746.8 741.1 L745.1 743.0 L742.1 744.5 L743.5 747.1 L742.0 750.3 L740.4 751.8 L738.8 750.9 L737.0 748.2 Z" fill="#bfcdea"/>
<path d="M745.7 746.6 L745.6 743.5 L746.8 741.1 L743.0 738.0 L746.8 737.8 L749.6 738.0 L750.7 740.9 L752.5 743.0 L753.7 744.5 L750.8 746.6 L745.7 746.6 Z" fill="#d0dbef"/>
<path d="M734.7 751.9 L735.1 750.2 L736.8 749.5 L737.1 751.3 L738.6 751.7 L737.4 752.6 L736.0 752.6 L734.7 751.9 Z" fill="#d0dbef"/>
<path d="M740.3 753.6 L744.0 752.6 L748.6 753.3 L749.4 755.7 L748.7 757.6 L748.5 758.9 L745.0 758.4 L741.3 756.8 L741.0 755.1 L740.3 753.6 Z" fill="#dae3f3"/>
<path d="M736.5 761.0 L739.8 760.7 L740.4 759.2 L743.4 759.5 L743.1 761.5 L740.3 761.8 L737.5 761.5 L736.5 761.0 Z" fill="#d0dbef"/>
<path d="M733.3 762.1 L734.7 760.6 L736.5 760.7 L737.4 761.7 L736.1 762.5 L734.2 762.5 L733.3 762.1 Z" fill="#d8e1f3"/>
<path d="M730.0 756.8 L731.5 756.4 L733.1 757.1 L733.0 758.3 L731.5 758.0 L730.0 756.8 Z" fill="#dfe6f4"/>
<path d="M734.9 764.8 L734.2 762.5 L736.1 762.5 L737.4 761.7 L740.3 761.8 L740.6 762.8 L739.3 763.9 L741.1 766.3 L743.1 767.5 L745.7 768.9 L744.3 770.3 L743.9 771.4 L743.1 771.4 L742.9 769.2 L739.7 767.1 L737.7 765.9 L737.2 764.6 L735.3 764.6 L734.9 764.8 Z" fill="#e3e9f5"/>
<path d="M754.4 768.0 L755.8 767.7 L762.5 767.5 L767.9 767.5 L766.0 765.2 L763.3 763.5 L760.9 763.5 L758.8 762.4 L756.1 762.9 L754.5 765.2 L754.4 768.0 Z" fill="#ffffff"/>
<path d="M772.3 763.5 L774.7 761.8 L778.0 763.5 L777.2 768.0 L779.5 769.2 L781.2 772.6 L777.2 772.6 L775.5 769.2 L772.3 763.5 Z" fill="#ffffff"/>
</g>
<defs><linearGradient id="lg" x1="0" y1="0" x2="0" y2="1"><stop offset="0" stop-color="#264c8c"/><stop offset="1" stop-color="#dce5f4"/></linearGradient></defs>
<rect x="929.00" y="694.20" width="5.80" height="59.50" fill="url(#lg)"/>
<text x="924.7" y="683.3" font-size="6.3" fill="#595959">Sales</text>
<text x="939.2" y="696.7" font-size="6.8" fill="#595959">29823.83</text>
<text x="939.2" y="757.3" font-size="6.8" fill="#595959">0</text>
<text x="916.4" y="953.4" font-size="4.6" fill="#595959" text-anchor="end">Powered by Bing</text>
<text x="916.4" y="960.6" font-size="4.6" fill="#595959" text-anchor="end" textLength="207.5" lengthAdjust="spacingAndGlyphs">© Australian Bureau of Statistics, GeoNames, Microsoft, Navinfo, OpenStreetMap, TomTom</text>
</svg><div style="position:absolute;left:27.5px;top:267.5px;width:222px;height:733px;background:rgba(128,128,128,0.53);box-shadow:inset -1px -1px 0 #7a7a7a"></div>
<div class="t" style="left:31.60px;top:284.77px;font-size:18.47px;color:#5a6d85;transform:scaleY(1.08);transform-origin:0 85%;-webkit-text-stroke:0.4px #bcbcbc">Sales analysis</div>
<div class="sb" style="left:29.4px;top:309.4px;width:153.2px;height:105.1px;border-color:#5a7ab6"></div>
<div class="t" style="left:36.00px;top:313.23px;font-size:11.42px;font-weight:bold;color:#262626">Salesperson</div>
<svg style="position:absolute;left:141px;top:313.5px" width="13" height="12" viewBox="0 0 13 12"><path d="M0.5 2 L1.5 3 L3 1 M0.5 6 L1.5 7 L3 5 M0.5 10 L1.5 11 L3 9" fill="none" stroke="#8a8a8a" stroke-width="0.9"/><path d="M4.5 2 H12.5 M4.5 6 H12.5 M4.5 10 H12.5" stroke="#8a8a8a" stroke-width="1.1"/></svg>
<svg style="position:absolute;left:163.5px;top:313.5px" width="12" height="12" viewBox="0 0 12 12"><path d="M0.5 0.5 H10 L6.5 4.5 V11 L4 9.5 V4.5 Z" fill="#9c9c9c"/><path d="M6.5 6.5 L11 11 M11 6.5 L6.5 11" stroke="#9c9c9c" stroke-width="1"/></svg>
<div style="position:absolute;left:34.9px;top:329.0px;width:142.1px;height:1.2px;background:#5a7ab6"></div>
<div style="position:absolute;left:164px;top:331px;width:13px;height:77px;background:#b6b6b6"></div>
<div style="position:absolute;left:170px;top:344px;width:1px;height:17px;background:#555"></div>
<div style="position:absolute;left:36.5px;top:331.4px;width:125.3px;height:76.1px;overflow:hidden">
<div class="si" style="left:0;top:0px;width:125.3px"></div>
<div class="t" style="left:6.40px;top:3.57px;font-size:10.20px;color:#262626">Andrew Fuller</div>
<div class="si" style="left:0;top:20px;width:125.3px"></div>
<div class="t" style="left:6.40px;top:23.57px;font-size:10.20px;color:#262626">Anne Dodsworth</div>
<div class="si" style="left:0;top:40px;width:125.3px"></div>
<div class="t" style="left:6.40px;top:43.57px;font-size:10.20px;color:#262626">Janet Leverling</div>
<div class="si" style="left:0;top:60px;width:125.3px"></div>
<div class="t" style="left:6.40px;top:63.57px;font-size:10.20px;color:#262626">Laura Callahan</div>
</div>
<div class="sb" style="left:35.4px;top:424.3px;width:173.2px;height:240.2px;border-color:#5a7ab6"></div>
<div class="t" style="left:42.20px;top:428.73px;font-size:10.95px;font-weight:bold;color:#262626">Country</div>
<svg style="position:absolute;left:167.4px;top:428px" width="13" height="12" viewBox="0 0 13 12"><path d="M0.5 2 L1.5 3 L3 1 M0.5 6 L1.5 7 L3 5 M0.5 10 L1.5 11 L3 9" fill="none" stroke="#8a8a8a" stroke-width="0.9"/><path d="M4.5 2 H12.5 M4.5 6 H12.5 M4.5 10 H12.5" stroke="#8a8a8a" stroke-width="1.1"/></svg>
<svg style="position:absolute;left:190px;top:428px" width="12" height="12" viewBox="0 0 12 12"><path d="M0.5 0.5 H10 L6.5 4.5 V11 L4 9.5 V4.5 Z" fill="#6e6e6e"/><path d="M6.5 6.5 L11.5 11.5 M11.5 6.5 L6.5 11.5" stroke="#d9534f" stroke-width="1.1"/></svg>
<div style="position:absolute;left:40.9px;top:442.9px;width:162.6px;height:1.2px;background:#5a7ab6"></div>
<div style="position:absolute;left:189px;top:446px;width:14px;height:212px;background:#b6b6b6"></div>
<div style="position:absolute;left:196px;top:476px;width:1px;height:89px;background:#555"></div>
<div style="position:absolute;left:42px;top:446px;width:145.6px;height:211.5px;overflow:hidden">
<div class="si su" style="left:0;top:0px;width:145.6px"></div>
<div class="t" style="left:6.60px;top:3.57px;font-size:10.20px;color:#262626">Belgium</div>
<div class="si" style="left:0;top:20px;width:145.6px"></div>
<div class="t" style="left:6.60px;top:23.57px;font-size:10.20px;color:#262626">Brazil</div>
<div class="si" style="left:0;top:40px;width:145.6px"></div>
<div class="t" style="left:6.60px;top:43.57px;font-size:10.20px;color:#262626">Canada</div>
<div class="si" style="left:0;top:60px;width:145.6px"></div>
<div class="t" style="left:6.60px;top:63.57px;font-size:10.20px;color:#262626">Denmark</div>
<div class="si" style="left:0;top:80px;width:145.6px"></div>
<div class="t" style="left:6.60px;top:83.57px;font-size:10.20px;color:#262626">Finland</div>
<div class="si" style="left:0;top:100px;width:145.6px"></div>
<div class="t" style="left:6.60px;top:103.57px;font-size:10.20px;color:#262626">France</div>
<div class="si" style="left:0;top:120px;width:145.6px"></div>
<div class="t" style="left:6.60px;top:123.57px;font-size:10.20px;color:#262626">Germany</div>
<div class="si" style="left:0;top:140px;width:145.6px"></div>
<div class="t" style="left:6.60px;top:143.57px;font-size:10.20px;color:#262626">Ireland</div>
<div class="si" style="left:0;top:160px;width:145.6px"></div>
<div class="t" style="left:6.60px;top:163.57px;font-size:10.20px;color:#262626">Italy</div>
<div class="si" style="left:0;top:180px;width:145.6px"></div>
<div class="t" style="left:6.60px;top:183.57px;font-size:10.20px;color:#262626">Mexico</div>
<div class="si" style="left:0;top:200px;width:145.6px"></div>
<div class="t" style="left:6.60px;top:203.57px;font-size:10.20px;color:#262626">Norway</div>
</div>
<div style="position:absolute;left:206px;top:633.5px;width:3.5px;height:32px;background:#bcbcbc"></div>
<div class="sb" style="left:27.6px;top:668.7px;width:173.0px;height:95.9px;border-color:#5a7ab6"></div>
<div class="t" style="left:33.60px;top:672.00px;font-size:11.57px;font-weight:bold;color:#262626">OrderDate</div>
<svg style="position:absolute;left:158px;top:672px" width="13" height="12" viewBox="0 0 13 12"><path d="M0.5 2 L1.5 3 L3 1 M0.5 6 L1.5 7 L3 5 M0.5 10 L1.5 11 L3 9" fill="none" stroke="#8a8a8a" stroke-width="0.9"/><path d="M4.5 2 H12.5 M4.5 6 H12.5 M4.5 10 H12.5" stroke="#8a8a8a" stroke-width="1.1"/></svg>
<svg style="position:absolute;left:181px;top:672px" width="12" height="12" viewBox="0 0 12 12"><path d="M0.5 0.5 H10 L6.5 4.5 V11 L4 9.5 V4.5 Z" fill="#9c9c9c"/><path d="M6.5 6.5 L11 11 M11 6.5 L6.5 11" stroke="#9c9c9c" stroke-width="1"/></svg>
<div style="position:absolute;left:33.1px;top:687.1px;width:162.4px;height:1.2px;background:#5a7ab6"></div>
<div style="position:absolute;left:33.4px;top:691.6px;width:160.6px;height:58.4px;overflow:hidden">
<div class="si" style="left:0;top:0px;width:160.6px"></div>
<div class="t" style="left:6.10px;top:3.57px;font-size:10.20px;color:#262626">31/12/2010</div>
<div class="si" style="left:0;top:20px;width:160.6px"></div>
<div class="t" style="left:6.10px;top:23.57px;font-size:10.20px;color:#262626">31/12/2011</div>
<div class="si" style="left:0;top:40px;width:160.6px"></div>
<div class="t" style="left:6.10px;top:43.57px;font-size:10.20px;color:#262626">31/12/2012</div>
</div>
<div class="sb" style="left:32.4px;top:769.4px;width:183.4px;height:185.8px;border-color:#5a7ab6"></div>
<div class="t" style="left:38.70px;top:773.50px;font-size:11.46px;font-weight:bold;color:#262626">ProductName</div>
<svg style="position:absolute;left:174px;top:774px" width="13" height="12" viewBox="0 0 13 12"><path d="M0.5 2 L1.5 3 L3 1 M0.5 6 L1.5 7 L3 5 M0.5 10 L1.5 11 L3 9" fill="none" stroke="#8a8a8a" stroke-width="0.9"/><path d="M4.5 2 H12.5 M4.5 6 H12.5 M4.5 10 H12.5" stroke="#8a8a8a" stroke-width="1.1"/></svg>
<svg style="position:absolute;left:197px;top:774px" width="12" height="12" viewBox="0 0 12 12"><path d="M0.5 0.5 H10 L6.5 4.5 V11 L4 9.5 V4.5 Z" fill="#6e6e6e"/><path d="M6.5 6.5 L11.5 11.5 M11.5 6.5 L6.5 11.5" stroke="#d9534f" stroke-width="1.1"/></svg>
<div style="position:absolute;left:37.9px;top:789.0px;width:172.1px;height:1.2px;background:#5a7ab6"></div>
<div style="position:absolute;left:198px;top:790px;width:12px;height:160px;background:#b6b6b6"></div>
<div style="position:absolute;left:203.5px;top:804px;width:1px;height:12px;background:#555"></div>
<div style="position:absolute;left:39.2px;top:791.3px;width:155.4px;height:157.7px;overflow:hidden">
<div class="si su" style="left:0;top:0px;width:155.4px"></div>
<div class="t" style="left:6.50px;top:3.57px;font-size:10.20px;color:#262626">Alice Mutton</div>
<div class="si su" style="left:0;top:20px;width:155.4px"></div>
<div class="t" style="left:6.50px;top:23.57px;font-size:10.20px;color:#262626">Aniseed Syrup</div>
<div class="si" style="left:0;top:40px;width:155.4px"></div>
<div class="t" style="left:6.50px;top:43.57px;font-size:10.20px;color:#262626">Boston Crab Meat</div>
<div class="si" style="left:0;top:60px;width:155.4px"></div>
<div class="t" style="left:6.50px;top:63.57px;font-size:10.20px;color:#262626">Camembert Pierrot</div>
<div class="si" style="left:0;top:80px;width:155.4px"></div>
<div class="t" style="left:6.50px;top:83.57px;font-size:10.20px;color:#262626">Carnarvon Tigers</div>
<div class="si" style="left:0;top:100px;width:155.4px"></div>
<div class="t" style="left:6.50px;top:103.57px;font-size:10.20px;color:#262626">Chai</div>
<div class="si" style="left:0;top:120px;width:155.4px"></div>
<div class="t" style="left:6.50px;top:123.57px;font-size:10.20px;color:#262626">Chang</div>
<div class="si" style="left:0;top:140px;width:155.4px"></div>
<div class="t" style="left:6.50px;top:143.57px;font-size:10.20px;color:#262626">Chartreuse verte</div>
</div>
<div style="position:absolute;left:16px;top:261px;width:256px;height:756px;border:3px solid #e2433f;box-sizing:border-box"></div><div style="position:absolute;left:2px;top:1026.5px;width:1063px;height:31.5px;background:#eeefea"></div>
<div style="position:absolute;left:0;top:1058px;width:1316px;height:1px;background:#d8d8d8"></div>
<div style="position:absolute;left:0;top:1059px;width:1316px;height:2.5px;background:#f0f0f0"></div>
<div style="position:absolute;left:0;top:1061.5px;width:1316px;height:4px;background:#000"></div>
<svg style="position:absolute;left:28px;top:1036.5px" width="9" height="11"><path d="M7.5 1 L2 5.5 L7.5 10" fill="none" stroke="#9a9a9a" stroke-width="1.2"/></svg>
<svg style="position:absolute;left:61px;top:1036.5px" width="9" height="11"><path d="M1.5 1 L7 5.5 L1.5 10" fill="none" stroke="#9a9a9a" stroke-width="1.2"/></svg>
<div class="t" style="left:125.40px;top:1036.07px;font-size:13.03px">Sheet2</div>
<div style="position:absolute;left:180px;top:1032.5px;width:1px;height:17.5px;background:#cfcfcf"></div>
<div class="t" style="left:193.60px;top:1035.94px;font-size:13.19px">Invoices</div>
<div style="position:absolute;left:256px;top:1032.5px;width:1px;height:17.5px;background:#cfcfcf"></div>
<div class="t" style="left:270.30px;top:1035.64px;font-size:13.54px">Dynamic Arrays</div>
<div style="position:absolute;left:381px;top:1032.5px;width:1px;height:17.5px;background:#cfcfcf"></div>
<div style="position:absolute;left:384.7px;top:1026.5px;width:85.7px;height:27.5px;background:#fff;border-radius:0 0 6px 6px;box-shadow:0 1px 1.5px rgba(0,0,0,0.18)"></div>
<div class="t" style="left:393.90px;top:1032.83px;font-size:12.96px;font-weight:bold;color:#333">Dashboard</div>
<div style="position:absolute;left:393.9px;top:1049px;width:67.7px;height:2px;background:#127c42"></div>
<div style="position:absolute;left:474px;top:1032.5px;width:1px;height:17.5px;background:#cfcfcf"></div>
<svg style="position:absolute;left:516px;top:1036px" width="12" height="12"><path d="M6 0.5 V11.5 M0.5 6 H11.5" stroke="#333" stroke-width="1.1"/></svg>
<div style="position:absolute;left:641px;top:1035px;width:2px;height:2px;background:#333;box-shadow:0 4.5px 0 #333,0 9px 0 #333"></div>
<div style="position:absolute;left:660px;top:1031px;width:386px;height:21px;background:#f3f4f0;border-radius:4px"></div>
<svg style="position:absolute;left:662.5px;top:1037.5px" width="8" height="9"><path d="M7.5 0.5 V8.5 L0.5 4.5 Z" fill="#555"/></svg>
<div style="position:absolute;left:675px;top:1037.4px;width:337px;height:8.4px;background:#6f6f6f;border-radius:4.2px"></div>
<svg style="position:absolute;left:1034px;top:1037.5px" width="8" height="9"><path d="M0.5 0.5 V8.5 L7.5 4.5 Z" fill="#555"/></svg>
<div style="position:absolute;left:1043px;top:250px;width:22px;height:776.5px;background:#f3f4f0"></div>
<div style="position:absolute;left:1043px;top:267px;width:3px;height:759.5px;background:#e6e6e6"></div>
<div style="position:absolute;left:1050px;top:300px;width:9px;height:696px;background:#6f6f6f;border-radius:4.5px"></div>
<svg style="position:absolute;left:1050.5px;top:1017.5px" width="9" height="7"><path d="M0.5 0.5 H8.5 L4.5 6 Z" fill="#555"/></svg>
<div style="position:absolute;left:1063px;top:250px;width:1px;height:808px;background:#d4d4d4"></div>
<div style="position:absolute;left:1065px;top:250px;width:249px;height:808px;background:#efefef"></div>
<div style="position:absolute;left:1064.5px;top:250px;width:1px;height:808px;background:#c8c8c8"></div>
<div class="t" style="left:1080.50px;top:271.74px;font-size:19.80px;color:#222">Selection</div>
<svg style="position:absolute;left:1251.5px;top:273.5px" width="15" height="10"><path d="M1 1.5 L7.5 8 L14 1.5" fill="none" stroke="#333" stroke-width="1.2"/></svg>
<svg style="position:absolute;left:1285.5px;top:272.5px" width="12" height="12"><path d="M1 1 L11 11 M11 1 L1 11" stroke="#333" stroke-width="1.2"/></svg>
<div style="position:absolute;left:1083px;top:302.6px;width:60px;height:22px;background:#fdfdfd;border:1px solid #8a8a8a;box-sizing:border-box"></div>
<div style="position:absolute;left:1146px;top:302.6px;width:60px;height:22px;background:#fdfdfd;border:1px solid #8a8a8a;box-sizing:border-box"></div>
<div class="t" style="left:1155.40px;top:307.66px;font-size:12.21px;color:#222">Hide All</div>
<div style="position:absolute;left:1264px;top:306px;width:17px;height:14px;background:#fff"></div>
<svg style="position:absolute;left:1267px;top:309px" width="11" height="7"><path d="M1 6 L5.5 1.5 L10 6" fill="none" stroke="#333" stroke-width="1.2"/></svg>
<div style="position:absolute;left:1284px;top:306px;width:17px;height:14px;background:#fff"></div>
<svg style="position:absolute;left:1287px;top:310px" width="11" height="7"><path d="M1 1 L5.5 5.5 L10 1" fill="none" stroke="#333" stroke-width="1.5"/></svg>
<div style="position:absolute;left:1092.3px;top:339.2px;width:207.5px;height:22.3px;background:#fff;border:1px solid #6e6e6e;box-sizing:border-box"></div>
<div style="position:absolute;left:1092.3px;top:408.4px;width:207.5px;height:22.6px;background:#fff;border:1px solid #6e6e6e;box-sizing:border-box"></div>
<div style="position:absolute;left:1092.3px;top:431px;width:207.5px;height:23.0px;background:#fff;border:1px solid #6e6e6e;box-sizing:border-box"></div>
<div style="position:absolute;left:1092.3px;top:454px;width:207.5px;height:22.5px;background:#fff;border:1px solid #6e6e6e;box-sizing:border-box"></div>
<div style="position:absolute;left:1092.3px;top:430px;width:207.5px;height:1.5px;background:#555"></div>
<div style="position:absolute;left:1092.3px;top:452.6px;width:207.5px;height:1.5px;background:#555"></div>
<div class="t" style="left:1099.90px;top:344.88px;font-size:11.60px;color:#222">ProductName</div>
<div class="t" style="left:1094.60px;top:413.58px;font-size:11.60px;color:#222">OrderDate</div>
<div class="t" style="left:1097.40px;top:436.68px;font-size:11.60px;color:#222">Country</div>
<div class="t" style="left:1093.80px;top:460.18px;font-size:11.60px;color:#222">Salesperson</div>
<div class="t" style="left:1097.40px;top:482.95px;font-size:11.40px;color:#222">Chart 2</div>
<div class="t" style="left:1097.40px;top:505.65px;font-size:11.40px;color:#222">Chart 3</div>
<svg style="position:absolute;left:1255px;top:344.6px" width="18" height="11" viewBox="0 0 18 11"><path d="M1.2 7.5 C4 0.8 14 0.8 16.8 7.5" fill="none" stroke="#333" stroke-width="1.2"/><circle cx="9" cy="7" r="2.6" fill="none" stroke="#333" stroke-width="1.2"/></svg>
<svg style="position:absolute;left:1255px;top:367.5px" width="18" height="11" viewBox="0 0 18 11"><path d="M1.2 7.5 C4 0.8 14 0.8 16.8 7.5" fill="none" stroke="#333" stroke-width="1.2"/><circle cx="9" cy="7" r="2.6" fill="none" stroke="#333" stroke-width="1.2"/></svg>
<svg style="position:absolute;left:1255px;top:390.3px" width="18" height="11" viewBox="0 0 18 11"><path d="M1.2 7.5 C4 0.8 14 0.8 16.8 7.5" fill="none" stroke="#333" stroke-width="1.2"/><circle cx="9" cy="7" r="2.6" fill="none" stroke="#333" stroke-width="1.2"/></svg>
<svg style="position:absolute;left:1255px;top:413.4px" width="18" height="11" viewBox="0 0 18 11"><path d="M1.2 7.5 C4 0.8 14 0.8 16.8 7.5" fill="none" stroke="#333" stroke-width="1.2"/><circle cx="9" cy="7" r="2.6" fill="none" stroke="#333" stroke-width="1.2"/></svg>
<svg style="position:absolute;left:1255px;top:436.5px" width="18" height="11" viewBox="0 0 18 11"><path d="M1.2 7.5 C4 0.8 14 0.8 16.8 7.5" fill="none" stroke="#333" stroke-width="1.2"/><circle cx="9" cy="7" r="2.6" fill="none" stroke="#333" stroke-width="1.2"/></svg>
<svg style="position:absolute;left:1255px;top:459.3px" width="18" height="11" viewBox="0 0 18 11"><path d="M1.2 7.5 C4 0.8 14 0.8 16.8 7.5" fill="none" stroke="#333" stroke-width="1.2"/><circle cx="9" cy="7" r="2.6" fill="none" stroke="#333" stroke-width="1.2"/></svg>
<svg style="position:absolute;left:1255px;top:482.5px" width="18" height="11" viewBox="0 0 18 11"><path d="M1.2 7.5 C4 0.8 14 0.8 16.8 7.5" fill="none" stroke="#333" stroke-width="1.2"/><circle cx="9" cy="7" r="2.6" fill="none" stroke="#333" stroke-width="1.2"/></svg>
<svg style="position:absolute;left:1255px;top:505.3px" width="18" height="11" viewBox="0 0 18 11"><path d="M1.2 7.5 C4 0.8 14 0.8 16.8 7.5" fill="none" stroke="#333" stroke-width="1.2"/><circle cx="9" cy="7" r="2.6" fill="none" stroke="#333" stroke-width="1.2"/></svg><div style="position:absolute;left:952.7px;top:157.7px;width:187px;height:317px;background:#fff;border:1px solid #d2d2d2;border-radius:5px;box-sizing:border-box;box-shadow:1px 2px 4px rgba(0,0,0,0.12)"></div>
<div class="t" style="left:991.30px;top:167.57px;font-size:11.26px;color:#a8a8a8">Find...</div><div style="position:absolute;left:991.3px;top:178.7px;width:6.9px;height:1px;background:#a8a8a8"></div>
<div class="t" style="left:991.30px;top:195.34px;font-size:10.94px;color:#a8a8a8">Replace...</div><div style="position:absolute;left:991.3px;top:206.2px;width:7.9px;height:1px;background:#a8a8a8"></div>
<div class="t" style="left:991.30px;top:223.23px;font-size:11.31px;color:#1f1f1f">Go To...</div><div style="position:absolute;left:991.3px;top:234.4px;width:8.8px;height:1px;background:#1f1f1f"></div>
<div class="t" style="left:991.30px;top:251.36px;font-size:11.26px;color:#1f1f1f">Go To Special...</div><div style="position:absolute;left:1024.3px;top:262.5px;width:7.5px;height:1px;background:#1f1f1f"></div>
<div style="position:absolute;left:986px;top:271.7px;width:152px;height:1px;background:#d6d6d6"></div>
<div class="t" style="left:991.30px;top:281.87px;font-size:11.61px;color:#1f1f1f">Formulas</div><div style="position:absolute;left:1018.4px;top:293.3px;width:6.5px;height:1px;background:#1f1f1f"></div>
<div class="t" style="left:991.30px;top:310.04px;font-size:11.65px;color:#1f1f1f">Notes</div><div style="position:absolute;left:991.3px;top:321.5px;width:8.4px;height:1px;background:#1f1f1f"></div>
<div class="t" style="left:991.30px;top:337.82px;font-size:12.26px;color:#1f1f1f">Conditional Formatting</div><div style="position:absolute;left:991.3px;top:349.8px;width:8.9px;height:1px;background:#1f1f1f"></div>
<div class="t" style="left:991.30px;top:366.15px;font-size:11.63px;color:#1f1f1f">Constants</div><div style="position:absolute;left:1006.2px;top:377.6px;width:6.5px;height:1px;background:#1f1f1f"></div>
<div class="t" style="left:991.30px;top:393.45px;font-size:11.76px;color:#1f1f1f">Data Validation</div><div style="position:absolute;left:1019.4px;top:405.0px;width:7.8px;height:1px;background:#1f1f1f"></div>
<div class="t" style="left:991.30px;top:425.05px;font-size:11.40px;color:#1f1f1f">Select Objects</div><div style="position:absolute;left:1026.2px;top:436.3px;width:8.9px;height:1px;background:#1f1f1f"></div>
<div class="t" style="left:991.30px;top:453.05px;font-size:11.28px;color:#1f1f1f">Selection Pane...</div><div style="position:absolute;left:1040.9px;top:464.2px;width:7.5px;height:1px;background:#1f1f1f"></div>
<svg style="position:absolute;left:966px;top:162.5px" width="17" height="18" viewBox="0 0 17 18"><circle cx="9.5" cy="7.3" r="6.3" fill="#ececec" stroke="#a0a0a0" stroke-width="1.2"/><path d="M5 12 L0.8 16.5" stroke="#a0a0a0" stroke-width="1.2"/></svg>
<svg style="position:absolute;left:965.5px;top:191.5px" width="17" height="17" viewBox="0 0 17 17" font-family="Liberation Sans" fill="#a8a8a8"><text x="7.5" y="7.5" font-size="8">b</text><text x="11" y="16" font-size="8">c</text><path d="M5 4.5 C1 5.5 1 10.5 4.5 11.5 H9 M7 9.5 L9 11.5 L7 13.5" fill="none" stroke="#a8a8a8" stroke-width="1"/></svg>
<svg style="position:absolute;left:965.5px;top:222.5px" width="17" height="11" viewBox="0 0 17 11"><path d="M0.5 5.5 H15.5 M10.5 0.8 L15.5 5.5 L10.5 10.2" fill="none" stroke="#2b88d8" stroke-width="1.3"/></svg>
<svg style="position:absolute;left:964px;top:420px" width="20" height="20" viewBox="0 0 20 20"><rect x="0.7" y="0.7" width="18.6" height="18.6" fill="#f6f6f6" stroke="#333" stroke-width="1.3"/><path d="M4.3 3.3 V16 L7.2 13.2 L9 16.8 L10.8 15.9 L9.1 12.4 H13.2 Z" fill="#fff" stroke="#333" stroke-width="1" stroke-linejoin="round"/></svg>
<svg style="position:absolute;left:964px;top:447.8px" width="20" height="20" viewBox="0 0 20 20"><rect x="0.7" y="0.7" width="18.6" height="18.6" fill="#f6f6f6" stroke="#333" stroke-width="1.3"/><path d="M7.3 7.5 V2.7 H16.6 V11.8" fill="#f7d68e" stroke="#e8830c" stroke-width="1.2"/><rect x="7.3" y="2.7" width="9.3" height="9" fill="#f7d68e"/><path d="M7.3 7.5 V2.7 H16.6 V11.8" fill="none" stroke="#e8830c" stroke-width="1.2"/><rect x="2.3" y="9.3" width="9" height="7.7" fill="#fafafa" stroke="#333" stroke-width="1.1"/><path d="M11 6.8 V17.5 L13.2 15.4 L14.7 18.4 L16.2 17.6 L14.7 14.7 H17.6 Z" fill="#fff" stroke="#333" stroke-width="1" stroke-linejoin="round"/></svg>
<div style="position:absolute;left:951.8px;top:414px;width:183.7px;height:60.3px;border:3px solid #e2433f;box-sizing:border-box"></div></body></html>
